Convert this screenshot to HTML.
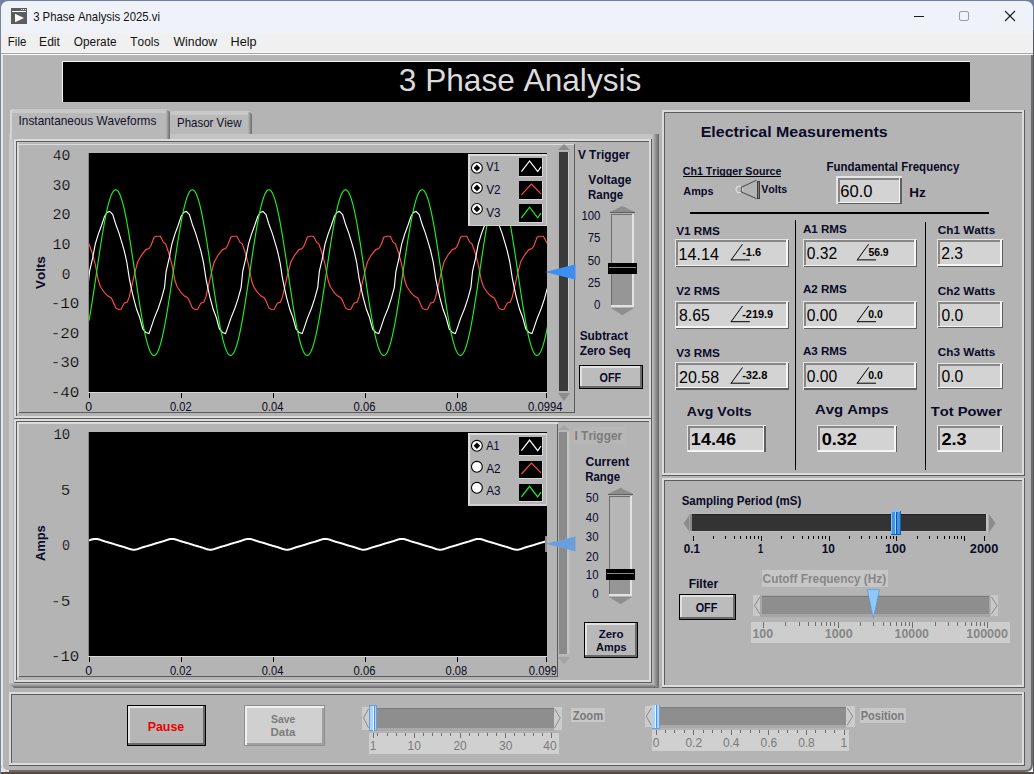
<!DOCTYPE html><html><head><meta charset="utf-8"><title>3 Phase Analysis</title><style>html,body{margin:0;padding:0;background:#5b5048;overflow:hidden}svg{display:block;font-kerning:none}text{white-space:pre}</style></head><body><svg width="1034" height="774" viewBox="0 0 1034 774"><defs><linearGradient id="gD" x1="0" x2="0" y1="0" y2="1"><stop offset="0" stop-color="#7080a0"/><stop offset="0.8" stop-color="#506070"/><stop offset="1" stop-color="#5b4a3c"/></linearGradient></defs>
<rect x="0" y="0" width="1034" height="774" fill="url(#gD)" />
<path d="M1,9 Q1,1 9,1 L1025,1 Q1033,1 1033,9 L1033,772 L1,772 Z" fill="#eff2f9"/>
<rect x="1" y="33" width="1032" height="19" fill="#f0f0f0" />
<rect x="1" y="52" width="1032" height="1" fill="#f7f7f7" />
<rect x="1" y="53" width="1032" height="1" fill="#a3a3a3" />
<rect x="1" y="54" width="1032" height="1" fill="#fdfdfd" />
<path d="M1,55 L1033,55 L1033,764 Q1033,772 1025,772 L9,772 Q1,772 1,764 Z" fill="#6a6a6a"/>
<path d="M1,55 L1031,55 L1031,764 Q1031,770 1025,770 L9,770 Q3,770 3,764 L3,55 Z" fill="#b4b4b4"/>
<path d="M1,55 L3,55 L3,764 Q3,770 9,770 L9,772 Q1,772 1,764 Z" fill="#e6e6e6"/>
<rect x="0" y="0" width="1" height="774" fill="#7a8498" />
<rect x="0" y="0" width="1034" height="1" fill="#6f7f9f" />
<rect x="1033" y="30" width="1" height="744" fill="#55555a" />
<rect x="11" y="8" width="16" height="16" fill="#5c5c5c" />
<rect x="12" y="11" width="14" height="1" fill="#ffffff" />
<rect x="21" y="9" width="1" height="1" fill="#ffffff" />
<rect x="23" y="9" width="1" height="1" fill="#ffffff" />
<rect x="25" y="9" width="1" height="1" fill="#ffffff" />
<polygon points="15,13.8 15,22.3 24,18" fill="#ffffff" />
<text x="33.17" y="20.80" font-family="Liberation Sans" font-size="12.80" font-weight="400" fill="#111" textLength="126.80" lengthAdjust="spacingAndGlyphs" >3 Phase Analysis 2025.vi</text>
<rect x="914" y="16" width="10" height="1" fill="#1a1a1a" />
<rect x="959.5" y="11.5" width="9" height="9" rx="1.5" fill="none" stroke="#9a9a9a" stroke-width="1"/>
<path d="M1005,11 L1015,21 M1015,11 L1005,21" stroke="#1a1a1a" stroke-width="1.1"/>
<text x="7.86" y="45.60" font-family="Liberation Sans" font-size="12.50" font-weight="400" fill="#111" textLength="18.45" lengthAdjust="spacingAndGlyphs" >File</text>
<text x="39.11" y="45.60" font-family="Liberation Sans" font-size="12.50" font-weight="400" fill="#111" textLength="20.78" lengthAdjust="spacingAndGlyphs" >Edit</text>
<text x="73.84" y="45.60" font-family="Liberation Sans" font-size="12.50" font-weight="400" fill="#111" textLength="42.68" lengthAdjust="spacingAndGlyphs" >Operate</text>
<text x="130.33" y="45.60" font-family="Liberation Sans" font-size="12.50" font-weight="400" fill="#111" textLength="28.99" lengthAdjust="spacingAndGlyphs" >Tools</text>
<text x="173.55" y="45.60" font-family="Liberation Sans" font-size="12.50" font-weight="400" fill="#111" textLength="43.62" lengthAdjust="spacingAndGlyphs" >Window</text>
<text x="230.56" y="45.60" font-family="Liberation Sans" font-size="12.50" font-weight="400" fill="#111" textLength="25.97" lengthAdjust="spacingAndGlyphs" >Help</text>
<rect x="62" y="61" width="908" height="41" fill="#000" />
<rect x="62" y="61" width="908" height="1" fill="#f2f2f2" />
<rect x="62" y="61" width="1" height="41" fill="#f2f2f2" />
<text x="398.80" y="90.70" font-family="Liberation Sans" font-size="31.80" font-weight="400" fill="#dcdcdc" textLength="242.55" lengthAdjust="spacingAndGlyphs" >3 Phase Analysis</text>
<rect x="9" y="134" width="650" height="554" fill="#b4b4b4" />
<rect x="9" y="134" width="4" height="550" fill="#cacaca" />
<rect x="9" y="134" width="650" height="5" fill="#c4c4c4" />
<defs><linearGradient id="gR" x1="0" x2="1" y1="0" y2="0"><stop offset="0" stop-color="#c4c4c4"/><stop offset="1" stop-color="#666"/></linearGradient><linearGradient id="gB" x1="0" x2="0" y1="0" y2="1"><stop offset="0" stop-color="#c4c4c4"/><stop offset="1" stop-color="#666"/></linearGradient><linearGradient id="gT" x1="0" x2="1" y1="0" y2="0"><stop offset="0" stop-color="#b8b8b8"/><stop offset="1" stop-color="#6a6a6a"/></linearGradient><clipPath id="cp1"><rect x="89" y="153" width="458" height="238"/></clipPath><clipPath id="cp2"><rect x="89" y="432" width="458" height="224"/></clipPath></defs>
<path d="M652,134 L659,134 L659,688 L652,683 Z" fill="url(#gR)"/>
<path d="M9,683 L652,683 L659,688 L14,688 Z" fill="url(#gB)"/>
<rect x="10" y="109" width="160" height="30" rx="3.5" fill="#c8c8c8"/>
<rect x="10" y="113" width="160" height="26" fill="#b8b8b8" />
<path d="M10,139 L10,112.5 Q10,109 13.5,109 L14,109 L14,110.5 L12,110.5 L12,139 Z" fill="#d4d4d4"/>
<path d="M166,110 Q170,110 170,113 L170,139 L166,139 Z" fill="url(#gT)"/>
<text x="18.50" y="125.00" font-family="Liberation Sans" font-size="12.20" font-weight="400" fill="#10102a" textLength="137.92" lengthAdjust="spacingAndGlyphs" >Instantaneous Waveforms</text>
<rect x="170" y="111" width="82" height="23" rx="3.5" fill="#c8c8c8"/>
<rect x="170" y="115" width="82" height="19" fill="#b9b9b9" />
<path d="M248,112 Q252,112 252,115 L252,134 L248,134 Z" fill="url(#gT)"/>
<text x="177.06" y="126.60" font-family="Liberation Sans" font-size="12.20" font-weight="400" fill="#10102a" textLength="64.41" lengthAdjust="spacingAndGlyphs" >Phasor View</text>
<rect x="14" y="139" width="638" height="2" fill="#dcdcdc" />
<rect x="14" y="139" width="2" height="280" fill="#dcdcdc" />
<rect x="14" y="418" width="638" height="1" fill="#5c5c5c" />
<rect x="651" y="139" width="1" height="280" fill="#5c5c5c" />
<rect x="16" y="141" width="633" height="1" fill="#5c5c5c" />
<rect x="16" y="141" width="1" height="275" fill="#5c5c5c" />
<rect x="16" y="416" width="635" height="2" fill="#dcdcdc" />
<rect x="649" y="141" width="2" height="277" fill="#dcdcdc" />
<rect x="14" y="419" width="638" height="2" fill="#dcdcdc" />
<rect x="14" y="419" width="2" height="264" fill="#dcdcdc" />
<rect x="14" y="682" width="638" height="1" fill="#5c5c5c" />
<rect x="651" y="419" width="1" height="264" fill="#5c5c5c" />
<rect x="16" y="421" width="633" height="1" fill="#5c5c5c" />
<rect x="16" y="421" width="1" height="259" fill="#5c5c5c" />
<rect x="16" y="680" width="635" height="2" fill="#dcdcdc" />
<rect x="649" y="421" width="2" height="261" fill="#dcdcdc" />
<rect x="662" y="110" width="363" height="2" fill="#dcdcdc" />
<rect x="662" y="110" width="2" height="366" fill="#dcdcdc" />
<rect x="662" y="475" width="363" height="1" fill="#5c5c5c" />
<rect x="1024" y="110" width="1" height="366" fill="#5c5c5c" />
<rect x="664" y="112" width="358" height="1" fill="#5c5c5c" />
<rect x="664" y="112" width="1" height="361" fill="#5c5c5c" />
<rect x="664" y="473" width="360" height="2" fill="#dcdcdc" />
<rect x="1022" y="112" width="2" height="363" fill="#dcdcdc" />
<rect x="662" y="478" width="363" height="2" fill="#dcdcdc" />
<rect x="662" y="478" width="2" height="210" fill="#dcdcdc" />
<rect x="662" y="687" width="363" height="1" fill="#5c5c5c" />
<rect x="1024" y="478" width="1" height="210" fill="#5c5c5c" />
<rect x="664" y="480" width="358" height="1" fill="#5c5c5c" />
<rect x="664" y="480" width="1" height="205" fill="#5c5c5c" />
<rect x="664" y="685" width="360" height="2" fill="#dcdcdc" />
<rect x="1022" y="480" width="2" height="207" fill="#dcdcdc" />
<rect x="9" y="692" width="1016" height="2" fill="#dcdcdc" />
<rect x="9" y="692" width="2" height="74" fill="#dcdcdc" />
<rect x="9" y="765" width="1016" height="1" fill="#5c5c5c" />
<rect x="1024" y="692" width="1" height="74" fill="#5c5c5c" />
<rect x="11" y="694" width="1011" height="1" fill="#5c5c5c" />
<rect x="11" y="694" width="1" height="69" fill="#5c5c5c" />
<rect x="11" y="763" width="1013" height="2" fill="#dcdcdc" />
<rect x="1022" y="694" width="2" height="71" fill="#dcdcdc" />
<rect x="17" y="142" width="558" height="1" fill="#bdbdbd" />
<rect x="17" y="144" width="558" height="1" fill="#dcdcdc" />
<rect x="17" y="142" width="2" height="271" fill="#dcdcdc" />
<rect x="19" y="412" width="556" height="1" fill="#5c5c5c" />
<rect x="574" y="144" width="1" height="269" fill="#5c5c5c" />
<rect x="17" y="422" width="541" height="2" fill="#dcdcdc" />
<rect x="17" y="422" width="2" height="255" fill="#dcdcdc" />
<rect x="19" y="676" width="539" height="1" fill="#5c5c5c" />
<rect x="557" y="424" width="1" height="253" fill="#5c5c5c" />
<rect x="88" y="153" width="459" height="239" fill="#000" />
<rect x="88" y="153" width="1" height="239" fill="#8a8a8a" />
<rect x="88" y="392" width="459" height="1" fill="#d8d8d8" />
<rect x="89" y="393" width="1" height="5" fill="#000" />
<rect x="181" y="393" width="1" height="5" fill="#000" />
<rect x="273" y="393" width="1" height="5" fill="#000" />
<rect x="365" y="393" width="1" height="5" fill="#000" />
<rect x="457" y="393" width="1" height="5" fill="#000" />
<rect x="546" y="393" width="1" height="5" fill="#000" />
<text x="85.37" y="411.00" font-family="Liberation Sans" font-size="12.60" font-weight="400" fill="#0a0a20" textLength="6.86" lengthAdjust="spacingAndGlyphs" >0</text>
<text x="169.91" y="411.00" font-family="Liberation Sans" font-size="12.60" font-weight="400" fill="#0a0a20" textLength="21.70" lengthAdjust="spacingAndGlyphs" >0.02</text>
<text x="261.72" y="411.00" font-family="Liberation Sans" font-size="12.60" font-weight="400" fill="#0a0a20" textLength="21.66" lengthAdjust="spacingAndGlyphs" >0.04</text>
<text x="353.61" y="411.00" font-family="Liberation Sans" font-size="12.60" font-weight="400" fill="#0a0a20" textLength="21.83" lengthAdjust="spacingAndGlyphs" >0.06</text>
<text x="445.56" y="411.00" font-family="Liberation Sans" font-size="12.60" font-weight="400" fill="#0a0a20" textLength="21.72" lengthAdjust="spacingAndGlyphs" >0.08</text>
<text x="52.76" y="160.00" font-family="Liberation Mono" font-size="14.20" font-weight="400" fill="#000" textLength="17.64" lengthAdjust="spacingAndGlyphs" stroke="#b4b4b4" stroke-width="0.25">40</text>
<text x="52.57" y="189.90" font-family="Liberation Mono" font-size="14.20" font-weight="400" fill="#000" textLength="17.84" lengthAdjust="spacingAndGlyphs" stroke="#b4b4b4" stroke-width="0.25">30</text>
<text x="52.45" y="218.90" font-family="Liberation Mono" font-size="14.20" font-weight="400" fill="#000" textLength="17.97" lengthAdjust="spacingAndGlyphs" stroke="#b4b4b4" stroke-width="0.25">20</text>
<text x="52.42" y="248.80" font-family="Liberation Mono" font-size="14.20" font-weight="400" fill="#000" textLength="18.01" lengthAdjust="spacingAndGlyphs" stroke="#b4b4b4" stroke-width="0.25">10</text>
<text x="61.73" y="279.20" font-family="Liberation Mono" font-size="14.20" font-weight="400" fill="#000" textLength="8.66" lengthAdjust="spacingAndGlyphs" stroke="#b4b4b4" stroke-width="0.25">0</text>
<text x="50.70" y="308.20" font-family="Liberation Mono" font-size="14.20" font-weight="400" fill="#000" textLength="28.68" lengthAdjust="spacingAndGlyphs" stroke="#b4b4b4" stroke-width="0.25">-10</text>
<text x="50.70" y="338.00" font-family="Liberation Mono" font-size="14.20" font-weight="400" fill="#000" textLength="28.68" lengthAdjust="spacingAndGlyphs" stroke="#b4b4b4" stroke-width="0.25">-20</text>
<text x="50.70" y="367.20" font-family="Liberation Mono" font-size="14.20" font-weight="400" fill="#000" textLength="28.68" lengthAdjust="spacingAndGlyphs" stroke="#b4b4b4" stroke-width="0.25">-30</text>
<text x="50.70" y="396.60" font-family="Liberation Mono" font-size="14.20" font-weight="400" fill="#000" textLength="28.68" lengthAdjust="spacingAndGlyphs" stroke="#b4b4b4" stroke-width="0.25">-40</text>
<text x="528.06" y="411.00" font-family="Liberation Sans" font-size="12.60" font-weight="400" fill="#0a0a20" textLength="34.47" lengthAdjust="spacingAndGlyphs" >0.0994</text>
<g transform="translate(45.2,288.8) rotate(-90)">
<text x="-0.09" y="0.00" font-family="Liberation Sans" font-size="13.20" font-weight="700" fill="#0a0a28" textLength="32.64" lengthAdjust="spacingAndGlyphs" >Volts</text>
</g>
<g clip-path="url(#cp1)">
<polyline points="79.60,236.20 83.80,236.20 86.90,242.40 89.00,243.90 92.10,252.70 95.20,264.10 98.30,280.30 100.40,286.50 104.50,292.70 107.60,295.80 111.30,297.90 112.80,301.00 115.90,308.20 118.50,309.50 121.10,309.30 124.20,303.10 127.30,302.00 129.30,296.90 131.40,287.60 134.50,274.10 137.60,262.00 141.70,254.80 145.90,249.60 149.00,248.60 151.00,245.50 154.10,237.20 156.20,236.20 160.40,236.20 163.50,242.40 165.60,243.90 168.70,252.70 171.80,264.10 174.90,280.30 177.00,286.50 181.10,292.70 184.20,295.80 187.90,297.90 189.40,301.00 192.50,308.20 195.10,309.50 197.70,309.30 200.80,303.10 203.90,302.00 205.90,296.90 208.00,287.60 211.10,274.10 214.20,262.00 218.30,254.80 222.50,249.60 225.60,248.60 227.60,245.50 230.70,237.20 232.80,236.20 237.00,236.20 240.10,242.40 242.20,243.90 245.30,252.70 248.40,264.10 251.50,280.30 253.60,286.50 257.70,292.70 260.80,295.80 264.50,297.90 266.00,301.00 269.10,308.20 271.70,309.50 274.30,309.30 277.40,303.10 280.50,302.00 282.50,296.90 284.60,287.60 287.70,274.10 290.80,262.00 294.90,254.80 299.10,249.60 302.20,248.60 304.20,245.50 307.30,237.20 309.40,236.20 313.60,236.20 316.70,242.40 318.80,243.90 321.90,252.70 325.00,264.10 328.10,280.30 330.20,286.50 334.30,292.70 337.40,295.80 341.10,297.90 342.60,301.00 345.70,308.20 348.30,309.50 350.90,309.30 354.00,303.10 357.10,302.00 359.10,296.90 361.20,287.60 364.30,274.10 367.40,262.00 371.50,254.80 375.70,249.60 378.80,248.60 380.80,245.50 383.90,237.20 386.00,236.20 390.20,236.20 393.30,242.40 395.40,243.90 398.50,252.70 401.60,264.10 404.70,280.30 406.80,286.50 410.90,292.70 414.00,295.80 417.70,297.90 419.20,301.00 422.30,308.20 424.90,309.50 427.50,309.30 430.60,303.10 433.70,302.00 435.70,296.90 437.80,287.60 440.90,274.10 444.00,262.00 448.10,254.80 452.30,249.60 455.40,248.60 457.40,245.50 460.50,237.20 462.60,236.20 466.80,236.20 469.90,242.40 472.00,243.90 475.10,252.70 478.20,264.10 481.30,280.30 483.40,286.50 487.50,292.70 490.60,295.80 494.30,297.90 495.80,301.00 498.90,308.20 501.50,309.50 504.10,309.30 507.20,303.10 510.30,302.00 512.30,296.90 514.40,287.60 517.50,274.10 520.60,262.00 524.70,254.80 528.90,249.60 532.00,248.60 534.00,245.50 537.10,237.20 539.20,236.20 543.40,236.20 546.50,242.40 548.60,243.90 551.70,252.70 554.80,264.10" fill="none" stroke="#ff4a4a" stroke-width="1.15" />
<polyline points="81.70,308.20 84.80,298.90 87.90,287.60 89.55,271.30 92.65,257.90 95.20,244.40 98.30,234.10 101.40,225.80 104.50,216.50 107.00,212.50 109.70,211.40 112.80,214.50 115.90,224.80 119.00,233.10 122.10,243.40 124.20,250.60 126.80,262.00 129.30,278.30 131.40,288.60 133.50,297.90 136.60,309.30 139.70,317.50 142.80,328.90 145.90,332.50 149.00,333.60 151.00,327.90 154.10,318.60 158.30,308.20 161.40,298.90 164.50,287.60 166.15,271.30 169.25,257.90 171.80,244.40 174.90,234.10 178.00,225.80 181.10,216.50 183.60,212.50 186.30,211.40 189.40,214.50 192.50,224.80 195.60,233.10 198.70,243.40 200.80,250.60 203.40,262.00 205.90,278.30 208.00,288.60 210.10,297.90 213.20,309.30 216.30,317.50 219.40,328.90 222.50,332.50 225.60,333.60 227.60,327.90 230.70,318.60 234.90,308.20 238.00,298.90 241.10,287.60 242.75,271.30 245.85,257.90 248.40,244.40 251.50,234.10 254.60,225.80 257.70,216.50 260.20,212.50 262.90,211.40 266.00,214.50 269.10,224.80 272.20,233.10 275.30,243.40 277.40,250.60 280.00,262.00 282.50,278.30 284.60,288.60 286.70,297.90 289.80,309.30 292.90,317.50 296.00,328.90 299.10,332.50 302.20,333.60 304.20,327.90 307.30,318.60 311.50,308.20 314.60,298.90 317.70,287.60 319.35,271.30 322.45,257.90 325.00,244.40 328.10,234.10 331.20,225.80 334.30,216.50 336.80,212.50 339.50,211.40 342.60,214.50 345.70,224.80 348.80,233.10 351.90,243.40 354.00,250.60 356.60,262.00 359.10,278.30 361.20,288.60 363.30,297.90 366.40,309.30 369.50,317.50 372.60,328.90 375.70,332.50 378.80,333.60 380.80,327.90 383.90,318.60 388.10,308.20 391.20,298.90 394.30,287.60 395.95,271.30 399.05,257.90 401.60,244.40 404.70,234.10 407.80,225.80 410.90,216.50 413.40,212.50 416.10,211.40 419.20,214.50 422.30,224.80 425.40,233.10 428.50,243.40 430.60,250.60 433.20,262.00 435.70,278.30 437.80,288.60 439.90,297.90 443.00,309.30 446.10,317.50 449.20,328.90 452.30,332.50 455.40,333.60 457.40,327.90 460.50,318.60 464.70,308.20 467.80,298.90 470.90,287.60 472.55,271.30 475.65,257.90 478.20,244.40 481.30,234.10 484.40,225.80 487.50,216.50 490.00,212.50 492.70,211.40 495.80,214.50 498.90,224.80 502.00,233.10 505.10,243.40 507.20,250.60 509.80,262.00 512.30,278.30 514.40,288.60 516.50,297.90 519.60,309.30 522.70,317.50 525.80,328.90 528.90,332.50 532.00,333.60 534.00,327.90 537.10,318.60 541.30,308.20 544.40,298.90 547.50,287.60 549.15,271.30 552.25,257.90 554.80,244.40" fill="none" stroke="#ffffff" stroke-width="1.15" />
<polyline points="89.00,320.69 89.50,317.88 90.00,315.00 90.50,312.05 91.00,309.03 91.50,305.95 92.00,302.81 92.50,299.62 93.00,296.39 93.50,293.11 94.00,289.80 94.50,286.47 95.00,283.11 95.50,279.73 96.00,276.34 96.50,272.94 97.00,269.54 97.50,266.15 98.00,262.77 98.50,259.40 99.00,256.06 99.50,252.75 100.00,249.47 100.50,246.22 101.00,243.03 101.50,239.88 102.00,236.78 102.50,233.75 103.00,230.78 103.50,227.89 104.00,225.06 104.50,222.32 105.00,219.66 105.50,217.10 106.00,214.62 106.50,212.24 107.00,209.97 107.50,207.80 108.00,205.73 108.50,203.78 109.00,201.95 109.50,200.23 110.00,198.64 110.50,197.17 111.00,195.83 111.50,194.62 112.00,193.54 112.50,192.59 113.00,191.77 113.50,191.10 114.00,190.55 114.50,190.15 115.00,189.89 115.50,189.76 116.00,189.78 116.50,189.93 117.00,190.22 117.50,190.65 118.00,191.22 118.50,191.93 119.00,192.77 119.50,193.74 120.00,194.85 120.50,196.09 121.00,197.46 121.50,198.95 122.00,200.57 122.50,202.31 123.00,204.16 123.50,206.14 124.00,208.22 124.50,210.41 125.00,212.71 125.50,215.11 126.00,217.60 126.50,220.19 127.00,222.86 127.50,225.62 128.00,228.46 128.50,231.37 129.00,234.35 129.50,237.40 130.00,240.50 130.50,243.66 131.00,246.87 131.50,250.12 132.00,253.41 132.50,256.73 133.00,260.08 133.50,263.44 134.00,266.83 134.50,270.22 135.00,273.62 135.50,277.02 136.00,280.40 136.50,283.78 137.00,287.14 137.50,290.47 138.00,293.77 138.50,297.04 139.00,300.26 139.50,303.44 140.00,306.57 140.50,309.64 141.00,312.64 141.50,315.58 142.00,318.45 142.50,321.24 143.00,323.95 143.50,326.57 144.00,329.11 144.50,331.54 145.00,333.88 145.50,336.12 146.00,338.24 146.50,340.26 147.00,342.16 147.50,343.95 148.00,345.62 148.50,347.16 149.00,348.58 149.50,349.87 150.00,351.03 150.50,352.06 151.00,352.95 151.50,353.71 152.00,354.34 152.50,354.82 153.00,355.17 153.50,355.38 154.00,355.45 154.50,355.38 155.00,355.17 155.50,354.82 156.00,354.34 156.50,353.71 157.00,352.95 157.50,352.06 158.00,351.03 158.50,349.87 159.00,348.58 159.50,347.16 160.00,345.62 160.50,343.95 161.00,342.16 161.50,340.26 162.00,338.24 162.50,336.12 163.00,333.88 163.50,331.54 164.00,329.11 164.50,326.57 165.00,323.95 165.50,321.24 166.00,318.45 166.50,315.58 167.00,312.64 167.50,309.64 168.00,306.57 168.50,303.44 169.00,300.26 169.50,297.04 170.00,293.77 170.50,290.47 171.00,287.14 171.50,283.78 172.00,280.40 172.50,277.02 173.00,273.62 173.50,270.22 174.00,266.83 174.50,263.44 175.00,260.08 175.50,256.73 176.00,253.41 176.50,250.12 177.00,246.87 177.50,243.66 178.00,240.50 178.50,237.40 179.00,234.35 179.50,231.37 180.00,228.46 180.50,225.62 181.00,222.86 181.50,220.19 182.00,217.60 182.50,215.11 183.00,212.71 183.50,210.41 184.00,208.22 184.50,206.14 185.00,204.16 185.50,202.31 186.00,200.57 186.50,198.95 187.00,197.46 187.50,196.09 188.00,194.85 188.50,193.74 189.00,192.77 189.50,191.93 190.00,191.22 190.50,190.65 191.00,190.22 191.50,189.93 192.00,189.78 192.50,189.76 193.00,189.89 193.50,190.15 194.00,190.55 194.50,191.10 195.00,191.77 195.50,192.59 196.00,193.54 196.50,194.62 197.00,195.83 197.50,197.17 198.00,198.64 198.50,200.23 199.00,201.95 199.50,203.78 200.00,205.73 200.50,207.80 201.00,209.97 201.50,212.24 202.00,214.62 202.50,217.10 203.00,219.66 203.50,222.32 204.00,225.06 204.50,227.89 205.00,230.78 205.50,233.75 206.00,236.78 206.50,239.88 207.00,243.03 207.50,246.22 208.00,249.47 208.50,252.75 209.00,256.06 209.50,259.40 210.00,262.77 210.50,266.15 211.00,269.54 211.50,272.94 212.00,276.34 212.50,279.73 213.00,283.11 213.50,286.47 214.00,289.80 214.50,293.11 215.00,296.39 215.50,299.62 216.00,302.81 216.50,305.95 217.00,309.03 217.50,312.05 218.00,315.00 218.50,317.88 219.00,320.69 219.50,323.42 220.00,326.06 220.50,328.61 221.00,331.06 221.50,333.42 222.00,335.68 222.50,337.83 223.00,339.87 223.50,341.79 224.00,343.60 224.50,345.29 225.00,346.86 225.50,348.31 226.00,349.62 226.50,350.81 227.00,351.86 227.50,352.79 228.00,353.57 228.50,354.22 229.00,354.74 229.50,355.11 230.00,355.35 230.50,355.45 231.00,355.41 231.50,355.22 232.00,354.90 232.50,354.45 233.00,353.85 233.50,353.12 234.00,352.25 234.50,351.25 235.00,350.11 235.50,348.85 236.00,347.45 236.50,345.94 237.00,344.29 237.50,342.53 238.00,340.65 238.50,338.66 239.00,336.55 239.50,334.34 240.00,332.02 240.50,329.60 241.00,327.09 241.50,324.48 242.00,321.79 242.50,319.02 243.00,316.16 243.50,313.24 244.00,310.24 244.50,307.19 245.00,304.07 245.50,300.90 246.00,297.68 246.50,294.43 247.00,291.13 247.50,287.80 248.00,284.45 248.50,281.08 249.00,277.69 249.50,274.30 250.00,270.90 250.50,267.51 251.00,264.12 251.50,260.75 252.00,257.40 252.50,254.07 253.00,250.77 253.50,247.52 254.00,244.30 254.50,241.13 255.00,238.01 255.50,234.96 256.00,231.96 256.50,229.04 257.00,226.18 257.50,223.41 258.00,220.72 258.50,218.11 259.00,215.60 259.50,213.18 260.00,210.86 260.50,208.65 261.00,206.54 261.50,204.55 262.00,202.67 262.50,200.91 263.00,199.26 263.50,197.75 264.00,196.35 264.50,195.09 265.00,193.95 265.50,192.95 266.00,192.08 266.50,191.35 267.00,190.75 267.50,190.30 268.00,189.98 268.50,189.79 269.00,189.75 269.50,189.85 270.00,190.09 270.50,190.46 271.00,190.98 271.50,191.63 272.00,192.41 272.50,193.34 273.00,194.39 273.50,195.58 274.00,196.89 274.50,198.34 275.00,199.91 275.50,201.60 276.00,203.41 276.50,205.33 277.00,207.37 277.50,209.52 278.00,211.78 278.50,214.14 279.00,216.59 279.50,219.14 280.00,221.78 280.50,224.51 281.00,227.32 281.50,230.20 282.00,233.15 282.50,236.17 283.00,239.25 283.50,242.39 284.00,245.58 284.50,248.81 285.00,252.09 285.50,255.40 286.00,258.73 286.50,262.09 287.00,265.47 287.50,268.86 288.00,272.26 288.50,275.66 289.00,279.05 289.50,282.43 290.00,285.80 290.50,289.14 291.00,292.45 291.50,295.73 292.00,298.98 292.50,302.17 293.00,305.32 293.50,308.42 294.00,311.45 294.50,314.42 295.00,317.31 295.50,320.14 296.00,322.88 296.50,325.54 297.00,328.10 297.50,330.58 298.00,332.96 298.50,335.23 299.00,337.40 299.50,339.47 300.00,341.42 300.50,343.25 301.00,344.97 301.50,346.56 302.00,348.03 302.50,349.37 303.00,350.58 303.50,351.66 304.00,352.61 304.50,353.43 305.00,354.10 305.50,354.65 306.00,355.05 306.50,355.31 307.00,355.44 307.50,355.42 308.00,355.27 308.50,354.98 309.00,354.55 309.50,353.98 310.00,353.27 310.50,352.43 311.00,351.46 311.50,350.35 312.00,349.11 312.50,347.74 313.00,346.25 313.50,344.63 314.00,342.89 314.50,341.04 315.00,339.06 315.50,336.98 316.00,334.79 316.50,332.49 317.00,330.09 317.50,327.60 318.00,325.01 318.50,322.34 319.00,319.58 319.50,316.74 320.00,313.83 320.50,310.85 321.00,307.80 321.50,304.70 322.00,301.54 322.50,298.33 323.00,295.08 323.50,291.79 324.00,288.47 324.50,285.12 325.00,281.76 325.50,278.37 326.00,274.98 326.50,271.58 327.00,268.18 327.50,264.80 328.00,261.42 328.50,258.06 329.00,254.73 329.50,251.43 330.00,248.16 330.50,244.94 331.00,241.76 331.50,238.63 332.00,235.56 332.50,232.56 333.00,229.62 333.50,226.75 334.00,223.96 334.50,221.25 335.00,218.63 335.50,216.09 336.00,213.66 336.50,211.32 337.00,209.08 337.50,206.96 338.00,204.94 338.50,203.04 339.00,201.25 339.50,199.58 340.00,198.04 340.50,196.62 341.00,195.33 341.50,194.17 342.00,193.14 342.50,192.25 343.00,191.49 343.50,190.86 344.00,190.38 344.50,190.03 345.00,189.82 345.50,189.75 346.00,189.82 346.50,190.03 347.00,190.38 347.50,190.86 348.00,191.49 348.50,192.25 349.00,193.14 349.50,194.17 350.00,195.33 350.50,196.62 351.00,198.04 351.50,199.58 352.00,201.25 352.50,203.04 353.00,204.94 353.50,206.96 354.00,209.08 354.50,211.32 355.00,213.66 355.50,216.09 356.00,218.63 356.50,221.25 357.00,223.96 357.50,226.75 358.00,229.62 358.50,232.56 359.00,235.56 359.50,238.63 360.00,241.76 360.50,244.94 361.00,248.16 361.50,251.43 362.00,254.73 362.50,258.06 363.00,261.42 363.50,264.80 364.00,268.18 364.50,271.58 365.00,274.98 365.50,278.37 366.00,281.76 366.50,285.12 367.00,288.47 367.50,291.79 368.00,295.08 368.50,298.33 369.00,301.54 369.50,304.70 370.00,307.80 370.50,310.85 371.00,313.83 371.50,316.74 372.00,319.58 372.50,322.34 373.00,325.01 373.50,327.60 374.00,330.09 374.50,332.49 375.00,334.79 375.50,336.98 376.00,339.06 376.50,341.04 377.00,342.89 377.50,344.63 378.00,346.25 378.50,347.74 379.00,349.11 379.50,350.35 380.00,351.46 380.50,352.43 381.00,353.27 381.50,353.98 382.00,354.55 382.50,354.98 383.00,355.27 383.50,355.42 384.00,355.44 384.50,355.31 385.00,355.05 385.50,354.65 386.00,354.10 386.50,353.43 387.00,352.61 387.50,351.66 388.00,350.58 388.50,349.37 389.00,348.03 389.50,346.56 390.00,344.97 390.50,343.25 391.00,341.42 391.50,339.47 392.00,337.40 392.50,335.23 393.00,332.96 393.50,330.58 394.00,328.10 394.50,325.54 395.00,322.88 395.50,320.14 396.00,317.31 396.50,314.42 397.00,311.45 397.50,308.42 398.00,305.32 398.50,302.17 399.00,298.98 399.50,295.73 400.00,292.45 400.50,289.14 401.00,285.80 401.50,282.43 402.00,279.05 402.50,275.66 403.00,272.26 403.50,268.86 404.00,265.47 404.50,262.09 405.00,258.73 405.50,255.40 406.00,252.09 406.50,248.81 407.00,245.58 407.50,242.39 408.00,239.25 408.50,236.17 409.00,233.15 409.50,230.20 410.00,227.32 410.50,224.51 411.00,221.78 411.50,219.14 412.00,216.59 412.50,214.14 413.00,211.78 413.50,209.52 414.00,207.37 414.50,205.33 415.00,203.41 415.50,201.60 416.00,199.91 416.50,198.34 417.00,196.89 417.50,195.58 418.00,194.39 418.50,193.34 419.00,192.41 419.50,191.63 420.00,190.98 420.50,190.46 421.00,190.09 421.50,189.85 422.00,189.75 422.50,189.79 423.00,189.98 423.50,190.30 424.00,190.75 424.50,191.35 425.00,192.08 425.50,192.95 426.00,193.95 426.50,195.09 427.00,196.35 427.50,197.75 428.00,199.26 428.50,200.91 429.00,202.67 429.50,204.55 430.00,206.54 430.50,208.65 431.00,210.86 431.50,213.18 432.00,215.60 432.50,218.11 433.00,220.72 433.50,223.41 434.00,226.18 434.50,229.04 435.00,231.96 435.50,234.96 436.00,238.01 436.50,241.13 437.00,244.30 437.50,247.52 438.00,250.77 438.50,254.07 439.00,257.40 439.50,260.75 440.00,264.12 440.50,267.51 441.00,270.90 441.50,274.30 442.00,277.69 442.50,281.08 443.00,284.45 443.50,287.80 444.00,291.13 444.50,294.43 445.00,297.68 445.50,300.90 446.00,304.07 446.50,307.19 447.00,310.24 447.50,313.24 448.00,316.16 448.50,319.02 449.00,321.79 449.50,324.48 450.00,327.09 450.50,329.60 451.00,332.02 451.50,334.34 452.00,336.55 452.50,338.66 453.00,340.65 453.50,342.53 454.00,344.29 454.50,345.94 455.00,347.45 455.50,348.85 456.00,350.11 456.50,351.25 457.00,352.25 457.50,353.12 458.00,353.85 458.50,354.45 459.00,354.90 459.50,355.22 460.00,355.41 460.50,355.45 461.00,355.35 461.50,355.11 462.00,354.74 462.50,354.22 463.00,353.57 463.50,352.79 464.00,351.86 464.50,350.81 465.00,349.62 465.50,348.31 466.00,346.86 466.50,345.29 467.00,343.60 467.50,341.79 468.00,339.87 468.50,337.83 469.00,335.68 469.50,333.42 470.00,331.06 470.50,328.61 471.00,326.06 471.50,323.42 472.00,320.69 472.50,317.88 473.00,315.00 473.50,312.05 474.00,309.03 474.50,305.95 475.00,302.81 475.50,299.62 476.00,296.39 476.50,293.11 477.00,289.80 477.50,286.47 478.00,283.11 478.50,279.73 479.00,276.34 479.50,272.94 480.00,269.54 480.50,266.15 481.00,262.77 481.50,259.40 482.00,256.06 482.50,252.75 483.00,249.47 483.50,246.22 484.00,243.03 484.50,239.88 485.00,236.78 485.50,233.75 486.00,230.78 486.50,227.89 487.00,225.06 487.50,222.32 488.00,219.66 488.50,217.10 489.00,214.62 489.50,212.24 490.00,209.97 490.50,207.80 491.00,205.73 491.50,203.78 492.00,201.95 492.50,200.23 493.00,198.64 493.50,197.17 494.00,195.83 494.50,194.62 495.00,193.54 495.50,192.59 496.00,191.77 496.50,191.10 497.00,190.55 497.50,190.15 498.00,189.89 498.50,189.76 499.00,189.78 499.50,189.93 500.00,190.22 500.50,190.65 501.00,191.22 501.50,191.93 502.00,192.77 502.50,193.74 503.00,194.85 503.50,196.09 504.00,197.46 504.50,198.95 505.00,200.57 505.50,202.31 506.00,204.16 506.50,206.14 507.00,208.22 507.50,210.41 508.00,212.71 508.50,215.11 509.00,217.60 509.50,220.19 510.00,222.86 510.50,225.62 511.00,228.46 511.50,231.37 512.00,234.35 512.50,237.40 513.00,240.50 513.50,243.66 514.00,246.87 514.50,250.12 515.00,253.41 515.50,256.73 516.00,260.08 516.50,263.44 517.00,266.83 517.50,270.22 518.00,273.62 518.50,277.02 519.00,280.40 519.50,283.78 520.00,287.14 520.50,290.47 521.00,293.77 521.50,297.04 522.00,300.26 522.50,303.44 523.00,306.57 523.50,309.64 524.00,312.64 524.50,315.58 525.00,318.45 525.50,321.24 526.00,323.95 526.50,326.57 527.00,329.11 527.50,331.54 528.00,333.88 528.50,336.12 529.00,338.24 529.50,340.26 530.00,342.16 530.50,343.95 531.00,345.62 531.50,347.16 532.00,348.58 532.50,349.87 533.00,351.03 533.50,352.06 534.00,352.95 534.50,353.71 535.00,354.34 535.50,354.82 536.00,355.17 536.50,355.38 537.00,355.45 537.50,355.38 538.00,355.17 538.50,354.82 539.00,354.34 539.50,353.71 540.00,352.95 540.50,352.06 541.00,351.03 541.50,349.87 542.00,348.58 542.50,347.16 543.00,345.62 543.50,343.95 544.00,342.16 544.50,340.26 545.00,338.24 545.50,336.12 546.00,333.88 546.50,331.54 547.00,329.11 547.50,326.57" fill="none" stroke="#1ef01e" stroke-width="1.15" />
</g>
<rect x="468" y="154" width="79" height="72" fill="#b4b4b4" />
<rect x="468" y="154" width="79" height="2" fill="#dadada" />
<rect x="468" y="154" width="2" height="72" fill="#dadada" />
<rect x="468" y="225" width="79" height="1" fill="#cfcfcf" />
<rect x="546" y="154" width="1" height="72" fill="#cfcfcf" />
<circle cx="476.9" cy="167.9" r="5.4" fill="#fff" stroke="#000" stroke-width="1.1"/>
<path d="M476.9,164.6 L480.2,167.9 L476.9,171.2 L473.6,167.9 Z" fill="#000"/>
<text x="486.15" y="171.00" font-family="Liberation Sans" font-size="12.80" font-weight="400" fill="#0a0a28" textLength="13.28" lengthAdjust="spacingAndGlyphs" >V1</text>
<rect x="519" y="158" width="24" height="19" fill="#d6d6d6" />
<rect x="519" y="158" width="23" height="18" fill="#000" />
<polyline points="521.40,171.60 529.60,161.00 537.70,171.60 541.00,166.90" fill="none" stroke="#ffffff" stroke-width="1.2" />
<circle cx="476.9" cy="187.9" r="5.4" fill="#fff" stroke="#000" stroke-width="1.1"/>
<path d="M476.9,184.6 L480.2,187.9 L476.9,191.2 L473.6,187.9 Z" fill="#000"/>
<text x="486.15" y="193.60" font-family="Liberation Sans" font-size="12.80" font-weight="400" fill="#0a0a28" textLength="14.45" lengthAdjust="spacingAndGlyphs" >V2</text>
<rect x="519" y="181" width="24" height="19" fill="#d6d6d6" />
<rect x="519" y="181" width="23" height="18" fill="#000" />
<polyline points="521.40,194.90 531.40,184.00 541.00,193.80" fill="none" stroke="#ff4a4a" stroke-width="1.2" />
<circle cx="476.9" cy="208.9" r="5.4" fill="#fff" stroke="#000" stroke-width="1.1"/>
<path d="M476.9,205.6 L480.2,208.9 L476.9,212.2 L473.6,208.9 Z" fill="#000"/>
<text x="486.15" y="216.90" font-family="Liberation Sans" font-size="12.80" font-weight="400" fill="#0a0a28" textLength="14.37" lengthAdjust="spacingAndGlyphs" >V3</text>
<rect x="519" y="204" width="24" height="19" fill="#d6d6d6" />
<rect x="519" y="204" width="23" height="18" fill="#000" />
<polyline points="521.40,217.80 529.60,207.20 537.70,217.80 541.00,213.10" fill="none" stroke="#22ee22" stroke-width="1.2" />
<rect x="558" y="151" width="12" height="241" fill="#b0b0b0" />
<rect x="559" y="152" width="9" height="239" fill="#3a3a3a" />
<rect x="568" y="152" width="1" height="239" fill="#cfcfcf" />
<polygon points="558,150 570,150 564,144" fill="#8c8c8c" />
<polygon points="558,393 570,393 564,401" fill="#8c8c8c" />
<polygon points="545.2,272 575.5,264.2 575.5,279.7" fill="#3c8ef0" />
<text x="577.92" y="158.70" font-family="Liberation Sans" font-size="12.40" font-weight="700" fill="#0a0a28" textLength="52.06" lengthAdjust="spacingAndGlyphs" >V Trigger</text>
<text x="588.32" y="184.00" font-family="Liberation Sans" font-size="12.40" font-weight="700" fill="#0a0a28" textLength="43.09" lengthAdjust="spacingAndGlyphs" >Voltage</text>
<text x="587.93" y="198.80" font-family="Liberation Sans" font-size="12.40" font-weight="700" fill="#0a0a28" textLength="35.16" lengthAdjust="spacingAndGlyphs" >Range</text>
<text x="581.41" y="219.60" font-family="Liberation Sans" font-size="12.40" font-weight="400" fill="#0a0a28" textLength="19.03" lengthAdjust="spacingAndGlyphs" >100</text>
<text x="587.79" y="241.80" font-family="Liberation Sans" font-size="12.40" font-weight="400" fill="#0a0a28" textLength="12.69" lengthAdjust="spacingAndGlyphs" >75</text>
<text x="587.76" y="265.10" font-family="Liberation Sans" font-size="12.40" font-weight="400" fill="#0a0a28" textLength="12.69" lengthAdjust="spacingAndGlyphs" >50</text>
<text x="587.79" y="287.00" font-family="Liberation Sans" font-size="12.40" font-weight="400" fill="#0a0a28" textLength="12.69" lengthAdjust="spacingAndGlyphs" >25</text>
<text x="594.10" y="309.00" font-family="Liberation Sans" font-size="12.40" font-weight="400" fill="#0a0a28" textLength="6.34" lengthAdjust="spacingAndGlyphs" >0</text>
<polygon points="609.8,212 635,212 622.4,206" fill="#8e8e8e" />
<rect x="610" y="212" width="25" height="1" fill="#5e5e5e" />
<rect x="611" y="214" width="23" height="91" fill="#b6b6b6" />
<rect x="611" y="214" width="1" height="91" fill="#6e6e6e" />
<rect x="611" y="214" width="23" height="1" fill="#6e6e6e" />
<rect x="632" y="214" width="2" height="91" fill="#e2e2e2" />
<rect x="612" y="274" width="20" height="31" fill="#969696" />
<rect x="611" y="305" width="23" height="2" fill="#e2e2e2" />
<rect x="608" y="263" width="29" height="11" fill="#000" />
<rect x="609" y="267" width="27" height="1" fill="#8a8a8a" />
<polygon points="610.8,308 634,308 622.4,315.2" fill="#8e8e8e" />
<text x="579.66" y="340.00" font-family="Liberation Sans" font-size="12.40" font-weight="700" fill="#0a0a28" textLength="48.29" lengthAdjust="spacingAndGlyphs" >Subtract</text>
<text x="579.65" y="354.90" font-family="Liberation Sans" font-size="12.40" font-weight="700" fill="#0a0a28" textLength="50.95" lengthAdjust="spacingAndGlyphs" >Zero Seq</text>
<rect x="579" y="365" width="64" height="24" fill="#000" />
<rect x="580" y="366" width="62" height="22" fill="#6a6a6a" />
<rect x="580" y="366" width="60" height="20" fill="#e2e2e2" />
<rect x="582" y="368" width="58" height="18" fill="#bcbcbc" />
<text x="599.56" y="382.00" font-family="Liberation Sans" font-size="12.80" font-weight="700" fill="#0a0a28" textLength="21.54" lengthAdjust="spacingAndGlyphs" >OFF</text>
<rect x="88" y="432" width="459" height="224" fill="#000" />
<rect x="88" y="432" width="1" height="224" fill="#8a8a8a" />
<rect x="88" y="656" width="459" height="1" fill="#d8d8d8" />
<rect x="89" y="657" width="1" height="5" fill="#000" />
<rect x="181" y="657" width="1" height="5" fill="#000" />
<rect x="273" y="657" width="1" height="5" fill="#000" />
<rect x="365" y="657" width="1" height="5" fill="#000" />
<rect x="457" y="657" width="1" height="5" fill="#000" />
<rect x="546" y="657" width="1" height="5" fill="#000" />
<text x="85.37" y="674.80" font-family="Liberation Sans" font-size="12.60" font-weight="400" fill="#0a0a20" textLength="6.86" lengthAdjust="spacingAndGlyphs" >0</text>
<text x="169.91" y="674.80" font-family="Liberation Sans" font-size="12.60" font-weight="400" fill="#0a0a20" textLength="21.70" lengthAdjust="spacingAndGlyphs" >0.02</text>
<text x="261.72" y="674.80" font-family="Liberation Sans" font-size="12.60" font-weight="400" fill="#0a0a20" textLength="21.66" lengthAdjust="spacingAndGlyphs" >0.04</text>
<text x="353.61" y="674.80" font-family="Liberation Sans" font-size="12.60" font-weight="400" fill="#0a0a20" textLength="21.83" lengthAdjust="spacingAndGlyphs" >0.06</text>
<text x="445.56" y="674.80" font-family="Liberation Sans" font-size="12.60" font-weight="400" fill="#0a0a20" textLength="21.72" lengthAdjust="spacingAndGlyphs" >0.08</text>
<text x="53.49" y="438.70" font-family="Liberation Mono" font-size="14.20" font-weight="400" fill="#000" textLength="16.77" lengthAdjust="spacingAndGlyphs" stroke="#b4b4b4" stroke-width="0.25">10</text>
<text x="60.81" y="494.50" font-family="Liberation Mono" font-size="14.20" font-weight="400" fill="#000" textLength="9.49" lengthAdjust="spacingAndGlyphs" stroke="#b4b4b4" stroke-width="0.25">5</text>
<text x="62.09" y="549.90" font-family="Liberation Mono" font-size="14.20" font-weight="400" fill="#000" textLength="8.03" lengthAdjust="spacingAndGlyphs" stroke="#b4b4b4" stroke-width="0.25">0</text>
<text x="50.97" y="606.10" font-family="Liberation Mono" font-size="14.20" font-weight="400" fill="#000" textLength="19.35" lengthAdjust="spacingAndGlyphs" stroke="#b4b4b4" stroke-width="0.25">-5</text>
<text x="51.04" y="660.90" font-family="Liberation Mono" font-size="14.20" font-weight="400" fill="#000" textLength="28.22" lengthAdjust="spacingAndGlyphs" stroke="#b4b4b4" stroke-width="0.25">-10</text>
<clipPath id="cpx"><rect x="520" y="660" width="36.5" height="20"/></clipPath>
<text x="528.76" y="674.80" font-family="Liberation Sans" font-size="12.60" font-weight="400" fill="#0a0a20" textLength="34.47" lengthAdjust="spacingAndGlyphs" clip-path="url(#cpx)">0.0994</text>
<g transform="translate(45.2,560.7) rotate(-90)">
<text x="-0.32" y="0.00" font-family="Liberation Sans" font-size="13.20" font-weight="700" fill="#0a0a28" textLength="35.75" lengthAdjust="spacingAndGlyphs" >Amps</text>
</g>
<g clip-path="url(#cp2)">
<polyline points="89.00,540.44 89.50,540.26 90.00,540.08 90.50,539.91 91.00,539.74 91.50,539.58 92.00,539.44 92.50,539.30 93.00,539.18 93.50,539.08 94.00,539.00 94.50,538.95 95.00,538.91 95.50,538.90 96.00,538.91 96.50,538.95 97.00,539.00 97.50,539.08 98.00,539.18 98.50,539.30 99.00,539.44 99.50,539.58 100.00,539.74 100.50,539.91 101.00,540.08 101.50,540.26 102.00,540.44 102.50,540.62 103.00,540.80 103.50,540.97 104.00,541.14 104.50,541.30 105.00,541.46 105.50,541.61 106.00,541.76 106.50,541.90 107.00,542.04 107.50,542.18 108.00,542.31 108.50,542.44 109.00,542.58 109.50,542.71 110.00,542.85 110.50,542.99 111.00,543.14 111.50,543.29 112.00,543.44 112.50,543.60 113.00,543.76 113.50,543.92 114.00,544.08 114.50,544.25 115.00,544.42 115.50,544.58 116.00,544.75 116.50,544.91 117.00,545.07 117.50,545.22 118.00,545.37 118.50,545.52 119.00,545.66 119.50,545.80 120.00,545.94 120.50,546.08 121.00,546.21 121.50,546.34 122.00,546.48 122.50,546.61 123.00,546.75 123.50,546.90 124.00,547.05 124.50,547.20 125.00,547.36 125.50,547.53 126.00,547.70 126.50,547.87 127.00,548.05 127.50,548.23 128.00,548.41 128.50,548.59 129.00,548.76 129.50,548.92 130.00,549.08 130.50,549.22 131.00,549.35 131.50,549.46 132.00,549.55 132.50,549.62 133.00,549.67 133.50,549.70 134.00,549.70 134.50,549.68 135.00,549.63 135.50,549.57 136.00,549.48 136.50,549.37 137.00,549.25 137.50,549.11 138.00,548.95 138.50,548.79 139.00,548.62 139.50,548.44 140.00,548.27 140.50,548.09 141.00,547.91 141.50,547.73 142.00,547.56 142.50,547.39 143.00,547.23 143.50,547.08 144.00,546.93 144.50,546.78 145.00,546.64 145.50,546.50 146.00,546.37 146.50,546.24 147.00,546.10 147.50,545.97 148.00,545.83 148.50,545.69 149.00,545.55 149.50,545.40 150.00,545.25 150.50,545.10 151.00,544.94 151.50,544.78 152.00,544.62 152.50,544.45 153.00,544.28 153.50,544.12 154.00,543.95 154.50,543.79 155.00,543.63 155.50,543.47 156.00,543.32 156.50,543.17 157.00,543.02 157.50,542.88 158.00,542.74 158.50,542.60 159.00,542.47 159.50,542.34 160.00,542.20 160.50,542.07 161.00,541.93 161.50,541.79 162.00,541.64 162.50,541.49 163.00,541.34 163.50,541.17 164.00,541.01 164.50,540.83 165.00,540.66 165.50,540.48 166.00,540.30 166.50,540.12 167.00,539.94 167.50,539.78 168.00,539.61 168.50,539.46 169.00,539.33 169.50,539.21 170.00,539.10 170.50,539.02 171.00,538.96 171.50,538.92 172.00,538.90 172.50,538.91 173.00,538.94 173.50,538.99 174.00,539.07 174.50,539.16 175.00,539.28 175.50,539.41 176.00,539.55 176.50,539.71 177.00,539.88 177.50,540.05 178.00,540.23 178.50,540.41 179.00,540.59 179.50,540.76 180.00,540.94 180.50,541.11 181.00,541.27 181.50,541.43 182.00,541.58 182.50,541.73 183.00,541.87 183.50,542.01 184.00,542.15 184.50,542.28 185.00,542.42 185.50,542.55 186.00,542.69 186.50,542.82 187.00,542.96 187.50,543.11 188.00,543.26 188.50,543.41 189.00,543.56 189.50,543.72 190.00,543.89 190.50,544.05 191.00,544.22 191.50,544.38 192.00,544.55 192.50,544.71 193.00,544.88 193.50,545.04 194.00,545.19 194.50,545.34 195.00,545.49 195.50,545.64 196.00,545.78 196.50,545.91 197.00,546.05 197.50,546.18 198.00,546.32 198.50,546.45 199.00,546.59 199.50,546.73 200.00,546.87 200.50,547.02 201.00,547.17 201.50,547.33 202.00,547.49 202.50,547.66 203.00,547.84 203.50,548.01 204.00,548.19 204.50,548.37 205.00,548.55 205.50,548.72 206.00,548.89 206.50,549.05 207.00,549.19 207.50,549.32 208.00,549.44 208.50,549.53 209.00,549.61 209.50,549.66 210.00,549.69 210.50,549.70 211.00,549.68 211.50,549.64 212.00,549.58 212.50,549.50 213.00,549.39 213.50,549.27 214.00,549.14 214.50,548.99 215.00,548.82 215.50,548.66 216.00,548.48 216.50,548.30 217.00,548.12 217.50,547.94 218.00,547.77 218.50,547.59 219.00,547.43 219.50,547.26 220.00,547.11 220.50,546.96 221.00,546.81 221.50,546.67 222.00,546.53 222.50,546.40 223.00,546.26 223.50,546.13 224.00,546.00 224.50,545.86 225.00,545.72 225.50,545.58 226.00,545.43 226.50,545.28 227.00,545.13 227.50,544.97 228.00,544.81 228.50,544.65 229.00,544.48 229.50,544.32 230.00,544.15 230.50,543.98 231.00,543.82 231.50,543.66 232.00,543.50 232.50,543.35 233.00,543.20 233.50,543.05 234.00,542.91 234.50,542.77 235.00,542.63 235.50,542.50 236.00,542.36 236.50,542.23 237.00,542.10 237.50,541.96 238.00,541.82 238.50,541.67 239.00,541.52 239.50,541.37 240.00,541.21 240.50,541.04 241.00,540.87 241.50,540.69 242.00,540.51 242.50,540.33 243.00,540.16 243.50,539.98 244.00,539.81 244.50,539.65 245.00,539.49 245.50,539.35 246.00,539.23 246.50,539.12 247.00,539.03 247.50,538.97 248.00,538.92 248.50,538.90 249.00,538.90 249.50,538.93 250.00,538.98 250.50,539.05 251.00,539.14 251.50,539.25 252.00,539.38 252.50,539.52 253.00,539.68 253.50,539.84 254.00,540.01 254.50,540.19 255.00,540.37 255.50,540.55 256.00,540.73 256.50,540.90 257.00,541.07 257.50,541.24 258.00,541.40 258.50,541.55 259.00,541.70 259.50,541.85 260.00,541.99 260.50,542.12 261.00,542.26 261.50,542.39 262.00,542.52 262.50,542.66 263.00,542.80 263.50,542.94 264.00,543.08 264.50,543.23 265.00,543.38 265.50,543.53 266.00,543.69 266.50,543.85 267.00,544.02 267.50,544.18 268.00,544.35 268.50,544.52 269.00,544.68 269.50,544.84 270.00,545.00 270.50,545.16 271.00,545.31 271.50,545.46 272.00,545.61 272.50,545.75 273.00,545.89 273.50,546.02 274.00,546.16 274.50,546.29 275.00,546.42 275.50,546.56 276.00,546.70 276.50,546.84 277.00,546.99 277.50,547.14 278.00,547.30 278.50,547.46 279.00,547.63 279.50,547.80 280.00,547.98 280.50,548.16 281.00,548.34 281.50,548.52 282.00,548.69 282.50,548.86 283.00,549.02 283.50,549.16 284.00,549.30 284.50,549.42 285.00,549.52 285.50,549.60 286.00,549.65 286.50,549.69 287.00,549.70 287.50,549.69 288.00,549.65 288.50,549.60 289.00,549.52 289.50,549.42 290.00,549.30 290.50,549.16 291.00,549.02 291.50,548.86 292.00,548.69 292.50,548.52 293.00,548.34 293.50,548.16 294.00,547.98 294.50,547.80 295.00,547.63 295.50,547.46 296.00,547.30 296.50,547.14 297.00,546.99 297.50,546.84 298.00,546.70 298.50,546.56 299.00,546.42 299.50,546.29 300.00,546.16 300.50,546.02 301.00,545.89 301.50,545.75 302.00,545.61 302.50,545.46 303.00,545.31 303.50,545.16 304.00,545.00 304.50,544.84 305.00,544.68 305.50,544.52 306.00,544.35 306.50,544.18 307.00,544.02 307.50,543.85 308.00,543.69 308.50,543.53 309.00,543.38 309.50,543.23 310.00,543.08 310.50,542.94 311.00,542.80 311.50,542.66 312.00,542.52 312.50,542.39 313.00,542.26 313.50,542.12 314.00,541.99 314.50,541.85 315.00,541.70 315.50,541.55 316.00,541.40 316.50,541.24 317.00,541.07 317.50,540.90 318.00,540.73 318.50,540.55 319.00,540.37 319.50,540.19 320.00,540.01 320.50,539.84 321.00,539.68 321.50,539.52 322.00,539.38 322.50,539.25 323.00,539.14 323.50,539.05 324.00,538.98 324.50,538.93 325.00,538.90 325.50,538.90 326.00,538.92 326.50,538.97 327.00,539.03 327.50,539.12 328.00,539.23 328.50,539.35 329.00,539.49 329.50,539.65 330.00,539.81 330.50,539.98 331.00,540.16 331.50,540.33 332.00,540.51 332.50,540.69 333.00,540.87 333.50,541.04 334.00,541.21 334.50,541.37 335.00,541.52 335.50,541.67 336.00,541.82 336.50,541.96 337.00,542.10 337.50,542.23 338.00,542.36 338.50,542.50 339.00,542.63 339.50,542.77 340.00,542.91 340.50,543.05 341.00,543.20 341.50,543.35 342.00,543.50 342.50,543.66 343.00,543.82 343.50,543.98 344.00,544.15 344.50,544.32 345.00,544.48 345.50,544.65 346.00,544.81 346.50,544.97 347.00,545.13 347.50,545.28 348.00,545.43 348.50,545.58 349.00,545.72 349.50,545.86 350.00,546.00 350.50,546.13 351.00,546.26 351.50,546.40 352.00,546.53 352.50,546.67 353.00,546.81 353.50,546.96 354.00,547.11 354.50,547.26 355.00,547.43 355.50,547.59 356.00,547.77 356.50,547.94 357.00,548.12 357.50,548.30 358.00,548.48 358.50,548.66 359.00,548.82 359.50,548.99 360.00,549.14 360.50,549.27 361.00,549.39 361.50,549.50 362.00,549.58 362.50,549.64 363.00,549.68 363.50,549.70 364.00,549.69 364.50,549.66 365.00,549.61 365.50,549.53 366.00,549.44 366.50,549.32 367.00,549.19 367.50,549.05 368.00,548.89 368.50,548.72 369.00,548.55 369.50,548.37 370.00,548.19 370.50,548.01 371.00,547.84 371.50,547.66 372.00,547.49 372.50,547.33 373.00,547.17 373.50,547.02 374.00,546.87 374.50,546.73 375.00,546.59 375.50,546.45 376.00,546.32 376.50,546.18 377.00,546.05 377.50,545.91 378.00,545.78 378.50,545.64 379.00,545.49 379.50,545.34 380.00,545.19 380.50,545.04 381.00,544.88 381.50,544.71 382.00,544.55 382.50,544.38 383.00,544.22 383.50,544.05 384.00,543.89 384.50,543.72 385.00,543.56 385.50,543.41 386.00,543.26 386.50,543.11 387.00,542.96 387.50,542.82 388.00,542.69 388.50,542.55 389.00,542.42 389.50,542.28 390.00,542.15 390.50,542.01 391.00,541.87 391.50,541.73 392.00,541.58 392.50,541.43 393.00,541.27 393.50,541.11 394.00,540.94 394.50,540.76 395.00,540.59 395.50,540.41 396.00,540.23 396.50,540.05 397.00,539.88 397.50,539.71 398.00,539.55 398.50,539.41 399.00,539.28 399.50,539.16 400.00,539.07 400.50,538.99 401.00,538.94 401.50,538.91 402.00,538.90 402.50,538.92 403.00,538.96 403.50,539.02 404.00,539.10 404.50,539.21 405.00,539.33 405.50,539.46 406.00,539.61 406.50,539.78 407.00,539.94 407.50,540.12 408.00,540.30 408.50,540.48 409.00,540.66 409.50,540.83 410.00,541.01 410.50,541.17 411.00,541.34 411.50,541.49 412.00,541.64 412.50,541.79 413.00,541.93 413.50,542.07 414.00,542.20 414.50,542.34 415.00,542.47 415.50,542.60 416.00,542.74 416.50,542.88 417.00,543.02 417.50,543.17 418.00,543.32 418.50,543.47 419.00,543.63 419.50,543.79 420.00,543.95 420.50,544.12 421.00,544.28 421.50,544.45 422.00,544.62 422.50,544.78 423.00,544.94 423.50,545.10 424.00,545.25 424.50,545.40 425.00,545.55 425.50,545.69 426.00,545.83 426.50,545.97 427.00,546.10 427.50,546.24 428.00,546.37 428.50,546.50 429.00,546.64 429.50,546.78 430.00,546.93 430.50,547.08 431.00,547.23 431.50,547.39 432.00,547.56 432.50,547.73 433.00,547.91 433.50,548.09 434.00,548.27 434.50,548.44 435.00,548.62 435.50,548.79 436.00,548.95 436.50,549.11 437.00,549.25 437.50,549.37 438.00,549.48 438.50,549.57 439.00,549.63 439.50,549.68 440.00,549.70 440.50,549.70 441.00,549.67 441.50,549.62 442.00,549.55 442.50,549.46 443.00,549.35 443.50,549.22 444.00,549.08 444.50,548.92 445.00,548.76 445.50,548.59 446.00,548.41 446.50,548.23 447.00,548.05 447.50,547.87 448.00,547.70 448.50,547.53 449.00,547.36 449.50,547.20 450.00,547.05 450.50,546.90 451.00,546.75 451.50,546.61 452.00,546.48 452.50,546.34 453.00,546.21 453.50,546.08 454.00,545.94 454.50,545.80 455.00,545.66 455.50,545.52 456.00,545.37 456.50,545.22 457.00,545.07 457.50,544.91 458.00,544.75 458.50,544.58 459.00,544.42 459.50,544.25 460.00,544.08 460.50,543.92 461.00,543.76 461.50,543.60 462.00,543.44 462.50,543.29 463.00,543.14 463.50,542.99 464.00,542.85 464.50,542.71 465.00,542.58 465.50,542.44 466.00,542.31 466.50,542.18 467.00,542.04 467.50,541.90 468.00,541.76 468.50,541.61 469.00,541.46 469.50,541.30 470.00,541.14 470.50,540.97 471.00,540.80 471.50,540.62 472.00,540.44 472.50,540.26 473.00,540.08 473.50,539.91 474.00,539.74 474.50,539.58 475.00,539.44 475.50,539.30 476.00,539.18 476.50,539.08 477.00,539.00 477.50,538.95 478.00,538.91 478.50,538.90 479.00,538.91 479.50,538.95 480.00,539.00 480.50,539.08 481.00,539.18 481.50,539.30 482.00,539.44 482.50,539.58 483.00,539.74 483.50,539.91 484.00,540.08 484.50,540.26 485.00,540.44 485.50,540.62 486.00,540.80 486.50,540.97 487.00,541.14 487.50,541.30 488.00,541.46 488.50,541.61 489.00,541.76 489.50,541.90 490.00,542.04 490.50,542.18 491.00,542.31 491.50,542.44 492.00,542.58 492.50,542.71 493.00,542.85 493.50,542.99 494.00,543.14 494.50,543.29 495.00,543.44 495.50,543.60 496.00,543.76 496.50,543.92 497.00,544.08 497.50,544.25 498.00,544.42 498.50,544.58 499.00,544.75 499.50,544.91 500.00,545.07 500.50,545.22 501.00,545.37 501.50,545.52 502.00,545.66 502.50,545.80 503.00,545.94 503.50,546.08 504.00,546.21 504.50,546.34 505.00,546.48 505.50,546.61 506.00,546.75 506.50,546.90 507.00,547.05 507.50,547.20 508.00,547.36 508.50,547.53 509.00,547.70 509.50,547.87 510.00,548.05 510.50,548.23 511.00,548.41 511.50,548.59 512.00,548.76 512.50,548.92 513.00,549.08 513.50,549.22 514.00,549.35 514.50,549.46 515.00,549.55 515.50,549.62 516.00,549.67 516.50,549.70 517.00,549.70 517.50,549.68 518.00,549.63 518.50,549.57 519.00,549.48 519.50,549.37 520.00,549.25 520.50,549.11 521.00,548.95 521.50,548.79 522.00,548.62 522.50,548.44 523.00,548.27 523.50,548.09 524.00,547.91 524.50,547.73 525.00,547.56 525.50,547.39 526.00,547.23 526.50,547.08 527.00,546.93 527.50,546.78 528.00,546.64 528.50,546.50 529.00,546.37 529.50,546.24 530.00,546.10 530.50,545.97 531.00,545.83 531.50,545.69 532.00,545.55 532.50,545.40 533.00,545.25 533.50,545.10 534.00,544.94 534.50,544.78 535.00,544.62 535.50,544.45 536.00,544.28 536.50,544.12 537.00,543.95 537.50,543.79 538.00,543.63 538.50,543.47 539.00,543.32 539.50,543.17 540.00,543.02 540.50,542.88 541.00,542.74 541.50,542.60 542.00,542.47 542.50,542.34 543.00,542.20 543.50,542.07 544.00,541.93 544.50,541.79 545.00,541.64 545.50,541.49 546.00,541.34 546.50,541.17 547.00,541.01 547.50,540.83" fill="none" stroke="#ffffff" stroke-width="2" />
</g>
<rect x="468" y="433" width="79" height="73" fill="#b4b4b4" />
<rect x="468" y="433" width="79" height="2" fill="#dadada" />
<rect x="468" y="433" width="2" height="73" fill="#dadada" />
<rect x="468" y="504" width="79" height="2" fill="#cfcfcf" />
<rect x="546" y="433" width="1" height="73" fill="#cfcfcf" />
<circle cx="476.9" cy="445.8" r="5.4" fill="#fff" stroke="#000" stroke-width="1.1"/>
<path d="M476.9,442.5 L480.2,445.8 L476.9,449.1 L473.6,445.8 Z" fill="#000"/>
<text x="486.18" y="449.90" font-family="Liberation Sans" font-size="12.80" font-weight="400" fill="#0a0a28" textLength="13.25" lengthAdjust="spacingAndGlyphs" >A1</text>
<rect x="519" y="437" width="24" height="19" fill="#d6d6d6" />
<rect x="519" y="437" width="23" height="18" fill="#000" />
<polyline points="521.40,450.70 529.60,440.10 537.70,450.70 541.00,446.00" fill="none" stroke="#ffffff" stroke-width="1.2" />
<circle cx="476.9" cy="466.8" r="5.4" fill="#fff" stroke="#000" stroke-width="1.1"/>
<text x="486.18" y="472.60" font-family="Liberation Sans" font-size="12.80" font-weight="400" fill="#0a0a28" textLength="14.42" lengthAdjust="spacingAndGlyphs" >A2</text>
<rect x="519" y="461" width="24" height="18" fill="#d6d6d6" />
<rect x="519" y="461" width="23" height="17" fill="#000" />
<polyline points="521.40,474.00 531.40,463.10 541.00,472.90" fill="none" stroke="#ff4a4a" stroke-width="1.2" />
<circle cx="476.9" cy="487.8" r="5.4" fill="#fff" stroke="#000" stroke-width="1.1"/>
<text x="486.18" y="495.40" font-family="Liberation Sans" font-size="12.80" font-weight="400" fill="#0a0a28" textLength="14.34" lengthAdjust="spacingAndGlyphs" >A3</text>
<rect x="519" y="484" width="24" height="18" fill="#d6d6d6" />
<rect x="519" y="484" width="23" height="17" fill="#000" />
<polyline points="521.40,496.90 529.60,486.30 537.70,496.90 541.00,492.20" fill="none" stroke="#22ee22" stroke-width="1.2" />
<rect x="558" y="431" width="12" height="225" fill="#b8b8b8" />
<rect x="559" y="432" width="9" height="222" fill="#8a8a8a" />
<rect x="567" y="432" width="2" height="222" fill="#c4c4c4" />
<polygon points="558,430 570,430 564,424.9" fill="#a4a4a4" />
<polygon points="558,657 570,657 564,664.7" fill="#a4a4a4" />
<rect x="545" y="536" width="2" height="16" fill="#8e8e8e" />
<polygon points="545.8,543.8 575.5,536.5 575.5,551.6" fill="#6b9fdc" />
<rect x="574" y="427" width="51" height="17" fill="#b7b7b7" />
<text x="574.50" y="440.00" font-family="Liberation Sans" font-size="12.40" font-weight="700" fill="#7c7c7c" textLength="47.68" lengthAdjust="spacingAndGlyphs" >I Trigger</text>
<text x="585.40" y="465.90" font-family="Liberation Sans" font-size="12.40" font-weight="700" fill="#0a0a28" textLength="43.85" lengthAdjust="spacingAndGlyphs" >Current</text>
<text x="585.13" y="480.70" font-family="Liberation Sans" font-size="12.40" font-weight="700" fill="#0a0a28" textLength="35.06" lengthAdjust="spacingAndGlyphs" >Range</text>
<text x="585.86" y="502.00" font-family="Liberation Sans" font-size="12.40" font-weight="400" fill="#0a0a28" textLength="12.69" lengthAdjust="spacingAndGlyphs" >50</text>
<text x="585.86" y="521.80" font-family="Liberation Sans" font-size="12.40" font-weight="400" fill="#0a0a28" textLength="12.69" lengthAdjust="spacingAndGlyphs" >40</text>
<text x="585.86" y="541.20" font-family="Liberation Sans" font-size="12.40" font-weight="400" fill="#0a0a28" textLength="12.69" lengthAdjust="spacingAndGlyphs" >30</text>
<text x="585.86" y="560.60" font-family="Liberation Sans" font-size="12.40" font-weight="400" fill="#0a0a28" textLength="12.69" lengthAdjust="spacingAndGlyphs" >20</text>
<text x="585.86" y="579.30" font-family="Liberation Sans" font-size="12.40" font-weight="400" fill="#0a0a28" textLength="12.69" lengthAdjust="spacingAndGlyphs" >10</text>
<text x="592.20" y="598.00" font-family="Liberation Sans" font-size="12.40" font-weight="400" fill="#0a0a28" textLength="6.34" lengthAdjust="spacingAndGlyphs" >0</text>
<polygon points="608.1,494 633,494 620.55,487.8" fill="#8e8e8e" />
<rect x="608" y="494" width="25" height="1" fill="#5e5e5e" />
<rect x="609" y="496" width="23" height="98" fill="#b6b6b6" />
<rect x="609" y="496" width="1" height="98" fill="#6e6e6e" />
<rect x="609" y="496" width="23" height="1" fill="#6e6e6e" />
<rect x="630" y="496" width="2" height="98" fill="#e2e2e2" />
<rect x="610" y="580" width="20" height="14" fill="#969696" />
<rect x="609" y="594" width="23" height="2" fill="#e2e2e2" />
<rect x="606" y="569" width="29" height="11" fill="#000" />
<rect x="607" y="573" width="27" height="1" fill="#8a8a8a" />
<polygon points="609.1,597 632,597 620.55,604.3" fill="#8e8e8e" />
<rect x="584" y="622" width="54" height="36" fill="#000" />
<rect x="585" y="623" width="52" height="34" fill="#6a6a6a" />
<rect x="585" y="623" width="50" height="32" fill="#e2e2e2" />
<rect x="587" y="625" width="48" height="30" fill="#b8b8b8" />
<text x="598.66" y="637.70" font-family="Liberation Sans" font-size="11.80" font-weight="700" fill="#0a0a28" textLength="24.99" lengthAdjust="spacingAndGlyphs" >Zero</text>
<text x="596.03" y="650.50" font-family="Liberation Sans" font-size="11.80" font-weight="700" fill="#0a0a28" textLength="30.52" lengthAdjust="spacingAndGlyphs" >Amps</text>
<text x="700.73" y="137.30" font-family="Liberation Sans" font-size="15.20" font-weight="700" fill="#0a0a28" textLength="186.92" lengthAdjust="spacingAndGlyphs" >Electrical Measurements</text>
<text x="682.76" y="174.80" font-family="Liberation Sans" font-size="11.20" font-weight="700" fill="#0a0a28" textLength="98.60" lengthAdjust="spacingAndGlyphs" >Ch1 Trigger Source</text>
<rect x="683" y="176" width="98" height="1" fill="#000" />
<text x="683.33" y="194.60" font-family="Liberation Sans" font-size="11.20" font-weight="700" fill="#0a0a28" textLength="30.11" lengthAdjust="spacingAndGlyphs" >Amps</text>
<text x="761.23" y="193.30" font-family="Liberation Sans" font-size="11.20" font-weight="700" fill="#0a0a28" textLength="26.01" lengthAdjust="spacingAndGlyphs" >Volts</text>
<circle cx="739.2" cy="189.4" r="3.1" fill="none" stroke="#dedede" stroke-width="1.2"/>
<path d="M740.6,187.6 L756.6,180.2 M740.6,191.6 L756.6,198.7" stroke="#3a3a3a" stroke-width="0.9"/>
<path d="M741.5,186.8 L741.5,192.2" stroke="#4a4a4a" stroke-width="0.8"/>
<rect x="757" y="181" width="3" height="18" fill="#3c3c3c" />
<rect x="758" y="182" width="1" height="16" fill="#7a7a7a" />
<text x="826.53" y="171.20" font-family="Liberation Sans" font-size="12.60" font-weight="700" fill="#0a0a28" textLength="132.83" lengthAdjust="spacingAndGlyphs" >Fundamental Frequency</text>
<rect x="836" y="176" width="66" height="28" fill="#e6e6e6" />
<rect x="838" y="178" width="64" height="26" fill="#5e5e5e" />
<rect x="838" y="178" width="62" height="25" fill="#f6f6f6" />
<rect x="838" y="178" width="61" height="24" fill="#868686" />
<rect x="840" y="180" width="59" height="22" fill="#d3d3d3" />
<text x="840.36" y="197.00" font-family="Liberation Sans" font-size="16.80" font-weight="400" fill="#000" textLength="32.19" lengthAdjust="spacingAndGlyphs" >60.0</text>
<text x="909.30" y="197.00" font-family="Liberation Sans" font-size="12.80" font-weight="700" fill="#0a0a28" textLength="16.49" lengthAdjust="spacingAndGlyphs" >Hz</text>
<rect x="690" y="212" width="299" height="2" fill="#000" />
<rect x="795" y="220" width="1" height="250" fill="#000" />
<rect x="925" y="222" width="1" height="248" fill="#000" />
<text x="676.22" y="234.50" font-family="Liberation Sans" font-size="11.60" font-weight="700" fill="#0a0a28" textLength="43.74" lengthAdjust="spacingAndGlyphs" >V1 RMS</text>
<rect x="675" y="239" width="114" height="28" fill="#e6e6e6" />
<rect x="676" y="240" width="113" height="27" fill="#5e5e5e" />
<rect x="676" y="240" width="112" height="26" fill="#f6f6f6" />
<rect x="676" y="240" width="110" height="25" fill="#868686" />
<rect x="678" y="242" width="108" height="23" fill="#d3d3d3" />
<text x="678.57" y="259.60" font-family="Liberation Sans" font-size="16.80" font-weight="400" fill="#000" textLength="40.30" lengthAdjust="spacingAndGlyphs" >14.14</text>
<path d="M730.9,260.2 L742.5,244.2 M730.9,259.9 L749.8,259.9" stroke="#000" stroke-width="1" fill="none"/>
<text x="742.17" y="255.90" font-family="Liberation Sans" font-size="11.20" font-weight="700" fill="#000" textLength="19.03" lengthAdjust="spacingAndGlyphs" >-1.6</text>
<text x="802.91" y="232.50" font-family="Liberation Sans" font-size="11.60" font-weight="700" fill="#0a0a28" textLength="43.83" lengthAdjust="spacingAndGlyphs" >A1 RMS</text>
<rect x="803" y="239" width="114" height="28" fill="#e6e6e6" />
<rect x="804" y="240" width="113" height="27" fill="#5e5e5e" />
<rect x="804" y="240" width="112" height="26" fill="#f6f6f6" />
<rect x="804" y="240" width="110" height="25" fill="#868686" />
<rect x="806" y="242" width="108" height="23" fill="#d3d3d3" />
<text x="806.79" y="259.10" font-family="Liberation Sans" font-size="16.80" font-weight="400" fill="#000" textLength="30.41" lengthAdjust="spacingAndGlyphs" >0.32</text>
<path d="M857.0,260.2 L868.6,244.2 M857.0,259.9 L876.0,259.9" stroke="#000" stroke-width="1" fill="none"/>
<text x="868.38" y="255.90" font-family="Liberation Sans" font-size="11.20" font-weight="700" fill="#000" textLength="20.27" lengthAdjust="spacingAndGlyphs" >56.9</text>
<text x="937.82" y="233.70" font-family="Liberation Sans" font-size="11.60" font-weight="700" fill="#0a0a28" textLength="57.36" lengthAdjust="spacingAndGlyphs" >Ch1 Watts</text>
<rect x="937" y="239" width="66" height="28" fill="#e6e6e6" />
<rect x="938" y="240" width="65" height="27" fill="#5e5e5e" />
<rect x="938" y="240" width="64" height="26" fill="#f6f6f6" />
<rect x="938" y="240" width="62" height="24" fill="#868686" />
<rect x="940" y="242" width="60" height="22" fill="#d3d3d3" />
<text x="941.31" y="259.10" font-family="Liberation Sans" font-size="16.80" font-weight="400" fill="#000" textLength="21.72" lengthAdjust="spacingAndGlyphs" >2.3</text>
<text x="676.22" y="295.30" font-family="Liberation Sans" font-size="11.60" font-weight="700" fill="#0a0a28" textLength="43.74" lengthAdjust="spacingAndGlyphs" >V2 RMS</text>
<rect x="675" y="301" width="114" height="28" fill="#e6e6e6" />
<rect x="676" y="302" width="113" height="27" fill="#5e5e5e" />
<rect x="676" y="302" width="112" height="26" fill="#f6f6f6" />
<rect x="676" y="302" width="110" height="24" fill="#868686" />
<rect x="678" y="304" width="108" height="22" fill="#d3d3d3" />
<text x="679.12" y="321.40" font-family="Liberation Sans" font-size="16.80" font-weight="400" fill="#000" textLength="30.65" lengthAdjust="spacingAndGlyphs" >8.65</text>
<path d="M730.9,322.0 L742.5,306.0 M730.9,321.7 L749.8,321.7" stroke="#000" stroke-width="1" fill="none"/>
<text x="742.17" y="317.70" font-family="Liberation Sans" font-size="11.20" font-weight="700" fill="#000" textLength="31.03" lengthAdjust="spacingAndGlyphs" >-219.9</text>
<text x="802.91" y="293.30" font-family="Liberation Sans" font-size="11.60" font-weight="700" fill="#0a0a28" textLength="43.83" lengthAdjust="spacingAndGlyphs" >A2 RMS</text>
<rect x="803" y="301" width="114" height="28" fill="#e6e6e6" />
<rect x="804" y="302" width="113" height="27" fill="#5e5e5e" />
<rect x="804" y="302" width="112" height="26" fill="#f6f6f6" />
<rect x="804" y="302" width="110" height="24" fill="#868686" />
<rect x="806" y="304" width="108" height="22" fill="#d3d3d3" />
<text x="806.79" y="320.90" font-family="Liberation Sans" font-size="16.80" font-weight="400" fill="#000" textLength="30.41" lengthAdjust="spacingAndGlyphs" >0.00</text>
<path d="M857.0,322.0 L868.6,306.0 M857.0,321.7 L876.0,321.7" stroke="#000" stroke-width="1" fill="none"/>
<text x="868.29" y="317.70" font-family="Liberation Sans" font-size="11.20" font-weight="700" fill="#000" textLength="14.48" lengthAdjust="spacingAndGlyphs" >0.0</text>
<text x="937.82" y="294.50" font-family="Liberation Sans" font-size="11.60" font-weight="700" fill="#0a0a28" textLength="57.36" lengthAdjust="spacingAndGlyphs" >Ch2 Watts</text>
<rect x="937" y="301" width="66" height="27" fill="#e6e6e6" />
<rect x="938" y="302" width="65" height="26" fill="#5e5e5e" />
<rect x="938" y="302" width="64" height="25" fill="#f6f6f6" />
<rect x="938" y="302" width="62" height="24" fill="#868686" />
<rect x="940" y="304" width="60" height="22" fill="#d3d3d3" />
<text x="941.49" y="320.90" font-family="Liberation Sans" font-size="16.80" font-weight="400" fill="#000" textLength="21.72" lengthAdjust="spacingAndGlyphs" >0.0</text>
<text x="676.22" y="356.60" font-family="Liberation Sans" font-size="11.60" font-weight="700" fill="#0a0a28" textLength="43.74" lengthAdjust="spacingAndGlyphs" >V3 RMS</text>
<rect x="675" y="362" width="114" height="28" fill="#e6e6e6" />
<rect x="676" y="363" width="113" height="27" fill="#5e5e5e" />
<rect x="676" y="363" width="112" height="25" fill="#f6f6f6" />
<rect x="676" y="363" width="110" height="24" fill="#868686" />
<rect x="678" y="365" width="108" height="22" fill="#d3d3d3" />
<text x="678.99" y="382.90" font-family="Liberation Sans" font-size="16.80" font-weight="400" fill="#000" textLength="40.21" lengthAdjust="spacingAndGlyphs" >20.58</text>
<path d="M730.9,383.5 L742.5,367.5 M730.9,383.2 L749.8,383.2" stroke="#000" stroke-width="1" fill="none"/>
<text x="742.17" y="379.20" font-family="Liberation Sans" font-size="11.20" font-weight="700" fill="#000" textLength="25.17" lengthAdjust="spacingAndGlyphs" >-32.8</text>
<text x="802.91" y="354.60" font-family="Liberation Sans" font-size="11.60" font-weight="700" fill="#0a0a28" textLength="43.83" lengthAdjust="spacingAndGlyphs" >A3 RMS</text>
<rect x="803" y="362" width="114" height="28" fill="#e6e6e6" />
<rect x="804" y="363" width="113" height="27" fill="#5e5e5e" />
<rect x="804" y="363" width="112" height="25" fill="#f6f6f6" />
<rect x="804" y="363" width="110" height="24" fill="#868686" />
<rect x="806" y="365" width="108" height="22" fill="#d3d3d3" />
<text x="806.79" y="382.40" font-family="Liberation Sans" font-size="16.80" font-weight="400" fill="#000" textLength="30.41" lengthAdjust="spacingAndGlyphs" >0.00</text>
<path d="M857.0,383.5 L868.6,367.5 M857.0,383.2 L876.0,383.2" stroke="#000" stroke-width="1" fill="none"/>
<text x="868.29" y="379.20" font-family="Liberation Sans" font-size="11.20" font-weight="700" fill="#000" textLength="14.48" lengthAdjust="spacingAndGlyphs" >0.0</text>
<text x="937.82" y="355.80" font-family="Liberation Sans" font-size="11.60" font-weight="700" fill="#0a0a28" textLength="57.36" lengthAdjust="spacingAndGlyphs" >Ch3 Watts</text>
<rect x="937" y="363" width="66" height="26" fill="#e6e6e6" />
<rect x="938" y="364" width="65" height="25" fill="#5e5e5e" />
<rect x="938" y="364" width="64" height="24" fill="#f6f6f6" />
<rect x="938" y="364" width="62" height="23" fill="#868686" />
<rect x="940" y="366" width="60" height="21" fill="#d3d3d3" />
<text x="941.49" y="382.40" font-family="Liberation Sans" font-size="16.80" font-weight="400" fill="#000" textLength="21.72" lengthAdjust="spacingAndGlyphs" >0.0</text>
<text x="686.85" y="415.60" font-family="Liberation Sans" font-size="13.60" font-weight="700" fill="#0a0a28" textLength="64.73" lengthAdjust="spacingAndGlyphs" >Avg Volts</text>
<rect x="687" y="425" width="79" height="27" fill="#e6e6e6" />
<rect x="688" y="426" width="78" height="26" fill="#5e5e5e" />
<rect x="688" y="426" width="76" height="26" fill="#f6f6f6" />
<rect x="688" y="426" width="75" height="24" fill="#868686" />
<rect x="690" y="428" width="73" height="22" fill="#d3d3d3" />
<text x="690.86" y="444.80" font-family="Liberation Sans" font-size="16.20" font-weight="700" fill="#000" textLength="45.29" lengthAdjust="spacingAndGlyphs" >14.46</text>
<text x="814.93" y="413.80" font-family="Liberation Sans" font-size="13.60" font-weight="700" fill="#0a0a28" textLength="73.58" lengthAdjust="spacingAndGlyphs" >Avg Amps</text>
<rect x="817" y="425" width="80" height="27" fill="#e6e6e6" />
<rect x="818" y="426" width="79" height="26" fill="#5e5e5e" />
<rect x="818" y="426" width="78" height="26" fill="#f6f6f6" />
<rect x="818" y="426" width="76" height="24" fill="#868686" />
<rect x="820" y="428" width="74" height="22" fill="#d3d3d3" />
<text x="821.68" y="444.60" font-family="Liberation Sans" font-size="16.20" font-weight="700" fill="#000" textLength="35.24" lengthAdjust="spacingAndGlyphs" >0.32</text>
<text x="930.73" y="415.80" font-family="Liberation Sans" font-size="13.60" font-weight="700" fill="#0a0a28" textLength="71.19" lengthAdjust="spacingAndGlyphs" >Tot Power</text>
<rect x="937" y="425" width="66" height="27" fill="#e6e6e6" />
<rect x="938" y="426" width="65" height="26" fill="#5e5e5e" />
<rect x="938" y="426" width="64" height="26" fill="#f6f6f6" />
<rect x="938" y="426" width="62" height="24" fill="#868686" />
<rect x="940" y="428" width="60" height="22" fill="#d3d3d3" />
<text x="941.57" y="444.60" font-family="Liberation Sans" font-size="16.20" font-weight="700" fill="#000" textLength="25.08" lengthAdjust="spacingAndGlyphs" >2.3</text>
<text x="681.67" y="504.80" font-family="Liberation Sans" font-size="12.50" font-weight="700" fill="#0a0a28" textLength="119.71" lengthAdjust="spacingAndGlyphs" >Sampling Period (mS)</text>
<rect x="690" y="513" width="296" height="19" fill="#bdbdbd" />
<rect x="691" y="514" width="295" height="17" fill="#333333" />
<rect x="691" y="514" width="295" height="1" fill="#1e1e1e" />
<rect x="690" y="514" width="2" height="17" fill="#8a8a8a" />
<polygon points="683.6,523.5 690,514 690,532.6" fill="#8c8c8c" />
<rect x="689" y="514" width="1" height="19" fill="#a0a0a0" />
<polygon points="995.5,523.2 988.8,514 988.8,532.6" fill="#8c8c8c" />
<rect x="986" y="514" width="2" height="19" fill="#c0c0c0" />
<rect x="693" y="536" width="1" height="5" fill="#000" />
<rect x="713" y="536" width="1" height="3" fill="#000" />
<rect x="725" y="536" width="1" height="3" fill="#000" />
<rect x="734" y="536" width="1" height="3" fill="#000" />
<rect x="740" y="536" width="1" height="3" fill="#000" />
<rect x="746" y="536" width="1" height="3" fill="#000" />
<rect x="750" y="536" width="1" height="3" fill="#000" />
<rect x="754" y="536" width="1" height="3" fill="#000" />
<rect x="758" y="536" width="1" height="3" fill="#000" />
<rect x="761" y="536" width="1" height="5" fill="#000" />
<rect x="781" y="536" width="1" height="3" fill="#000" />
<rect x="793" y="536" width="1" height="3" fill="#000" />
<rect x="802" y="536" width="1" height="3" fill="#000" />
<rect x="808" y="536" width="1" height="3" fill="#000" />
<rect x="813" y="536" width="1" height="3" fill="#000" />
<rect x="818" y="536" width="1" height="3" fill="#000" />
<rect x="822" y="536" width="1" height="3" fill="#000" />
<rect x="825" y="536" width="1" height="3" fill="#000" />
<rect x="829" y="536" width="1" height="5" fill="#000" />
<rect x="849" y="536" width="1" height="3" fill="#000" />
<rect x="861" y="536" width="1" height="3" fill="#000" />
<rect x="869" y="536" width="1" height="3" fill="#000" />
<rect x="876" y="536" width="1" height="3" fill="#000" />
<rect x="881" y="536" width="1" height="3" fill="#000" />
<rect x="886" y="536" width="1" height="3" fill="#000" />
<rect x="890" y="536" width="1" height="3" fill="#000" />
<rect x="893" y="536" width="1" height="3" fill="#000" />
<rect x="896" y="536" width="1" height="5" fill="#000" />
<rect x="917" y="536" width="1" height="3" fill="#000" />
<rect x="929" y="536" width="1" height="3" fill="#000" />
<rect x="937" y="536" width="1" height="3" fill="#000" />
<rect x="944" y="536" width="1" height="3" fill="#000" />
<rect x="949" y="536" width="1" height="3" fill="#000" />
<rect x="954" y="536" width="1" height="3" fill="#000" />
<rect x="957" y="536" width="1" height="3" fill="#000" />
<rect x="961" y="536" width="1" height="3" fill="#000" />
<rect x="964" y="536" width="1" height="5" fill="#000" />
<rect x="984" y="536" width="1" height="3" fill="#000" />
<rect x="984" y="536" width="1" height="5" fill="#000" />
<text x="683.74" y="552.70" font-family="Liberation Sans" font-size="12.60" font-weight="700" fill="#0a0a28" textLength="16.29" lengthAdjust="spacingAndGlyphs" >0.1</text>
<text x="757.92" y="552.70" font-family="Liberation Sans" font-size="12.60" font-weight="700" fill="#0a0a28" textLength="5.14" lengthAdjust="spacingAndGlyphs" >1</text>
<text x="821.65" y="552.70" font-family="Liberation Sans" font-size="12.60" font-weight="700" fill="#0a0a28" textLength="13.24" lengthAdjust="spacingAndGlyphs" >10</text>
<text x="885.01" y="552.70" font-family="Liberation Sans" font-size="12.60" font-weight="700" fill="#0a0a28" textLength="20.90" lengthAdjust="spacingAndGlyphs" >100</text>
<text x="969.85" y="552.70" font-family="Liberation Sans" font-size="12.60" font-weight="700" fill="#0a0a28" textLength="28.57" lengthAdjust="spacingAndGlyphs" >2000</text>
<rect x="891" y="511" width="10" height="24" fill="#1a5fa8" />
<rect x="891" y="511" width="9" height="23" fill="#78c0ff" />
<rect x="892" y="512" width="8" height="22" fill="#3c96f0" />
<rect x="895" y="512" width="1" height="22" fill="#a8d8ff" />
<rect x="896" y="512" width="1" height="22" fill="#1a4f90" />
<text x="688.70" y="587.90" font-family="Liberation Sans" font-size="12.60" font-weight="700" fill="#0a0a28" textLength="29.39" lengthAdjust="spacingAndGlyphs" >Filter</text>
<rect x="679" y="594" width="57" height="26" fill="#000" />
<rect x="680" y="595" width="55" height="24" fill="#6a6a6a" />
<rect x="680" y="595" width="53" height="22" fill="#e2e2e2" />
<rect x="682" y="597" width="51" height="20" fill="#bcbcbc" />
<text x="695.65" y="611.90" font-family="Liberation Sans" font-size="12.80" font-weight="700" fill="#0a0a28" textLength="21.74" lengthAdjust="spacingAndGlyphs" >OFF</text>
<rect x="762" y="570" width="126" height="17" fill="#c6c6c6" />
<text x="762.61" y="582.60" font-family="Liberation Sans" font-size="12.40" font-weight="700" fill="#868686" textLength="123.57" lengthAdjust="spacingAndGlyphs" >Cutoff Frequency (Hz)</text>
<rect x="753" y="595" width="7" height="21" fill="#c8c8c8" />
<path d="M760,597 L754.5,605.5 L760,614" fill="none" stroke="#8a8a8a" stroke-width="1"/>
<rect x="760" y="595" width="230" height="22" fill="#a6a6a6" />
<rect x="762" y="596" width="227" height="18" fill="#8e8e8e" />
<rect x="762" y="596" width="227" height="1" fill="#7a7a7a" />
<rect x="991" y="595" width="7" height="21" fill="#c8c8c8" />
<path d="M991.5,597 L997,605.5 L991.5,614" fill="none" stroke="#8a8a8a" stroke-width="1"/>
<rect x="751" y="622" width="259" height="21" fill="#cdcdcd" />
<rect x="763" y="622" width="1" height="6" fill="#6e6e6e" />
<rect x="785" y="622" width="1" height="4" fill="#6e6e6e" />
<rect x="799" y="622" width="1" height="4" fill="#6e6e6e" />
<rect x="808" y="622" width="1" height="4" fill="#6e6e6e" />
<rect x="815" y="622" width="1" height="4" fill="#6e6e6e" />
<rect x="821" y="622" width="1" height="4" fill="#6e6e6e" />
<rect x="826" y="622" width="1" height="4" fill="#6e6e6e" />
<rect x="830" y="622" width="1" height="4" fill="#6e6e6e" />
<rect x="834" y="622" width="1" height="4" fill="#6e6e6e" />
<rect x="838" y="622" width="1" height="6" fill="#6e6e6e" />
<rect x="860" y="622" width="1" height="4" fill="#6e6e6e" />
<rect x="873" y="622" width="1" height="4" fill="#6e6e6e" />
<rect x="883" y="622" width="1" height="4" fill="#6e6e6e" />
<rect x="890" y="622" width="1" height="4" fill="#6e6e6e" />
<rect x="896" y="622" width="1" height="4" fill="#6e6e6e" />
<rect x="901" y="622" width="1" height="4" fill="#6e6e6e" />
<rect x="905" y="622" width="1" height="4" fill="#6e6e6e" />
<rect x="909" y="622" width="1" height="4" fill="#6e6e6e" />
<rect x="912" y="622" width="1" height="6" fill="#6e6e6e" />
<rect x="935" y="622" width="1" height="4" fill="#6e6e6e" />
<rect x="948" y="622" width="1" height="4" fill="#6e6e6e" />
<rect x="957" y="622" width="1" height="4" fill="#6e6e6e" />
<rect x="965" y="622" width="1" height="4" fill="#6e6e6e" />
<rect x="971" y="622" width="1" height="4" fill="#6e6e6e" />
<rect x="976" y="622" width="1" height="4" fill="#6e6e6e" />
<rect x="980" y="622" width="1" height="4" fill="#6e6e6e" />
<rect x="984" y="622" width="1" height="4" fill="#6e6e6e" />
<rect x="987" y="622" width="1" height="6" fill="#6e6e6e" />
<text x="752.41" y="638.30" font-family="Liberation Sans" font-size="12.60" font-weight="700" fill="#868686" textLength="20.80" lengthAdjust="spacingAndGlyphs" >100</text>
<text x="824.71" y="638.30" font-family="Liberation Sans" font-size="12.60" font-weight="700" fill="#868686" textLength="28.01" lengthAdjust="spacingAndGlyphs" >1000</text>
<text x="894.62" y="638.30" font-family="Liberation Sans" font-size="12.60" font-weight="700" fill="#868686" textLength="34.28" lengthAdjust="spacingAndGlyphs" >10000</text>
<text x="966.21" y="638.30" font-family="Liberation Sans" font-size="12.60" font-weight="700" fill="#868686" textLength="41.80" lengthAdjust="spacingAndGlyphs" >100000</text>
<polygon points="866.8,589.2 879.9,589.2 873.4,619.5" fill="#5b9ee0" />
<polygon points="867.8,590 878.9,590 873.4,616.5" fill="#90c8fa" />
<rect x="127" y="705" width="79" height="41" fill="#000" />
<rect x="128" y="706" width="77" height="39" fill="#6a6a6a" />
<rect x="128" y="706" width="75" height="37" fill="#e2e2e2" />
<rect x="130" y="708" width="73" height="35" fill="#b6b6b6" />
<text x="147.67" y="731.00" font-family="Liberation Sans" font-size="13.20" font-weight="700" fill="#ee0000" textLength="36.55" lengthAdjust="spacingAndGlyphs" >Pause</text>
<rect x="244" y="705" width="81" height="41" fill="#8e8e8e" />
<rect x="245" y="706" width="79" height="39" fill="#f0f0f0" />
<rect x="247" y="708" width="77" height="37" fill="#a0a0a0" />
<rect x="247" y="708" width="75" height="35" fill="#d0d0d0" />
<text x="271.00" y="723.20" font-family="Liberation Sans" font-size="11.80" font-weight="700" fill="#7c7c7c" textLength="24.36" lengthAdjust="spacingAndGlyphs" >Save</text>
<text x="270.53" y="736.10" font-family="Liberation Sans" font-size="11.80" font-weight="700" fill="#7c7c7c" textLength="25.00" lengthAdjust="spacingAndGlyphs" >Data</text>
<rect x="362" y="707" width="7" height="23" fill="#cccccc" />
<path d="M368.5,708.8 L363.5,717.8 L368.5,727.9" fill="none" stroke="#8a8a8a" stroke-width="1"/>
<rect x="369" y="708" width="185" height="23" fill="#a9a9a9" />
<rect x="369" y="708" width="185" height="20" fill="#8e8e8e" />
<rect x="369" y="708" width="185" height="1" fill="#7c7c7c" />
<rect x="554" y="707" width="8" height="23" fill="#cccccc" />
<path d="M554.6,708.8 L560.1,717.8 L554.6,727.9" fill="none" stroke="#8a8a8a" stroke-width="1"/>
<rect x="369" y="733" width="190" height="21" fill="#d0d0d0" />
<rect x="373" y="733" width="1" height="5" fill="#6e6e6e" />
<rect x="377" y="733" width="1" height="3" fill="#6e6e6e" />
<rect x="387" y="733" width="1" height="3" fill="#6e6e6e" />
<rect x="396" y="733" width="1" height="3" fill="#6e6e6e" />
<rect x="405" y="733" width="1" height="3" fill="#6e6e6e" />
<rect x="414" y="733" width="1" height="5" fill="#6e6e6e" />
<rect x="423" y="733" width="1" height="3" fill="#6e6e6e" />
<rect x="432" y="733" width="1" height="3" fill="#6e6e6e" />
<rect x="441" y="733" width="1" height="3" fill="#6e6e6e" />
<rect x="450" y="733" width="1" height="3" fill="#6e6e6e" />
<rect x="460" y="733" width="1" height="5" fill="#6e6e6e" />
<rect x="469" y="733" width="1" height="3" fill="#6e6e6e" />
<rect x="478" y="733" width="1" height="3" fill="#6e6e6e" />
<rect x="487" y="733" width="1" height="3" fill="#6e6e6e" />
<rect x="496" y="733" width="1" height="3" fill="#6e6e6e" />
<rect x="505" y="733" width="1" height="5" fill="#6e6e6e" />
<rect x="514" y="733" width="1" height="3" fill="#6e6e6e" />
<rect x="524" y="733" width="1" height="3" fill="#6e6e6e" />
<rect x="533" y="733" width="1" height="3" fill="#6e6e6e" />
<rect x="542" y="733" width="1" height="3" fill="#6e6e6e" />
<rect x="551" y="733" width="1" height="5" fill="#6e6e6e" />
<text x="369.71" y="749.80" font-family="Liberation Sans" font-size="12.60" font-weight="400" fill="#7a7a7a" textLength="6.66" lengthAdjust="spacingAndGlyphs" >1</text>
<text x="407.60" y="749.80" font-family="Liberation Sans" font-size="12.60" font-weight="400" fill="#7a7a7a" textLength="13.31" lengthAdjust="spacingAndGlyphs" >10</text>
<text x="453.39" y="749.80" font-family="Liberation Sans" font-size="12.60" font-weight="400" fill="#7a7a7a" textLength="13.31" lengthAdjust="spacingAndGlyphs" >20</text>
<text x="499.10" y="749.80" font-family="Liberation Sans" font-size="12.60" font-weight="400" fill="#7a7a7a" textLength="13.31" lengthAdjust="spacingAndGlyphs" >30</text>
<text x="543.34" y="749.80" font-family="Liberation Sans" font-size="12.60" font-weight="400" fill="#7a7a7a" textLength="13.31" lengthAdjust="spacingAndGlyphs" >40</text>
<rect x="369" y="705" width="8" height="26" fill="#6aa0d8" />
<rect x="370" y="706" width="6" height="24" fill="#a8d4ff" />
<rect x="373" y="706" width="1" height="25" fill="#eaf4ff" />
<rect x="374" y="706" width="1" height="25" fill="#5a90d0" />
<rect x="571" y="708" width="34" height="14" fill="#c8c8c8" />
<text x="572.67" y="720.20" font-family="Liberation Sans" font-size="12.20" font-weight="700" fill="#7a7a7a" textLength="30.53" lengthAdjust="spacingAndGlyphs" >Zoom</text>
<rect x="645" y="706" width="7" height="21" fill="#cccccc" />
<path d="M651.3,708.2 L646.3,716.2 L651.3,725.3" fill="none" stroke="#8a8a8a" stroke-width="1"/>
<rect x="652" y="707" width="194" height="21" fill="#a9a9a9" />
<rect x="652" y="707" width="194" height="18" fill="#8e8e8e" />
<rect x="652" y="707" width="194" height="1" fill="#7c7c7c" />
<rect x="846" y="706" width="9" height="21" fill="#cccccc" />
<path d="M847.2,708.2 L852.7,716.2 L847.2,725.3" fill="none" stroke="#8a8a8a" stroke-width="1"/>
<rect x="652" y="730" width="197" height="21" fill="#d0d0d0" />
<rect x="656" y="730" width="1" height="5" fill="#6e6e6e" />
<rect x="665" y="730" width="1" height="3" fill="#6e6e6e" />
<rect x="674" y="730" width="1" height="3" fill="#6e6e6e" />
<rect x="684" y="730" width="1" height="3" fill="#6e6e6e" />
<rect x="693" y="730" width="1" height="5" fill="#6e6e6e" />
<rect x="703" y="730" width="1" height="3" fill="#6e6e6e" />
<rect x="712" y="730" width="1" height="3" fill="#6e6e6e" />
<rect x="721" y="730" width="1" height="3" fill="#6e6e6e" />
<rect x="731" y="730" width="1" height="5" fill="#6e6e6e" />
<rect x="740" y="730" width="1" height="3" fill="#6e6e6e" />
<rect x="750" y="730" width="1" height="3" fill="#6e6e6e" />
<rect x="759" y="730" width="1" height="3" fill="#6e6e6e" />
<rect x="768" y="730" width="1" height="5" fill="#6e6e6e" />
<rect x="778" y="730" width="1" height="3" fill="#6e6e6e" />
<rect x="787" y="730" width="1" height="3" fill="#6e6e6e" />
<rect x="797" y="730" width="1" height="3" fill="#6e6e6e" />
<rect x="806" y="730" width="1" height="5" fill="#6e6e6e" />
<rect x="815" y="730" width="1" height="3" fill="#6e6e6e" />
<rect x="825" y="730" width="1" height="3" fill="#6e6e6e" />
<rect x="834" y="730" width="1" height="3" fill="#6e6e6e" />
<rect x="844" y="730" width="1" height="5" fill="#6e6e6e" />
<text x="652.77" y="747.20" font-family="Liberation Sans" font-size="12.60" font-weight="400" fill="#7a7a7a" textLength="6.66" lengthAdjust="spacingAndGlyphs" >0</text>
<text x="685.43" y="747.20" font-family="Liberation Sans" font-size="12.60" font-weight="400" fill="#7a7a7a" textLength="16.64" lengthAdjust="spacingAndGlyphs" >0.2</text>
<text x="722.88" y="747.20" font-family="Liberation Sans" font-size="12.60" font-weight="400" fill="#7a7a7a" textLength="16.64" lengthAdjust="spacingAndGlyphs" >0.4</text>
<text x="760.55" y="747.20" font-family="Liberation Sans" font-size="12.60" font-weight="400" fill="#7a7a7a" textLength="16.64" lengthAdjust="spacingAndGlyphs" >0.6</text>
<text x="798.13" y="747.20" font-family="Liberation Sans" font-size="12.60" font-weight="400" fill="#7a7a7a" textLength="16.64" lengthAdjust="spacingAndGlyphs" >0.8</text>
<text x="840.51" y="747.20" font-family="Liberation Sans" font-size="12.60" font-weight="400" fill="#7a7a7a" textLength="6.66" lengthAdjust="spacingAndGlyphs" >1</text>
<rect x="652" y="705" width="8" height="24" fill="#6aa0d8" />
<rect x="652" y="705" width="7" height="23" fill="#a8d4ff" />
<rect x="655" y="705" width="1" height="23" fill="#eaf4ff" />
<rect x="656" y="705" width="1" height="23" fill="#5a90d0" />
<rect x="860" y="708" width="46" height="15" fill="#c8c8c8" />
<text x="860.76" y="720.00" font-family="Liberation Sans" font-size="12.20" font-weight="700" fill="#7a7a7a" textLength="43.42" lengthAdjust="spacingAndGlyphs" >Position</text></svg></body></html>
